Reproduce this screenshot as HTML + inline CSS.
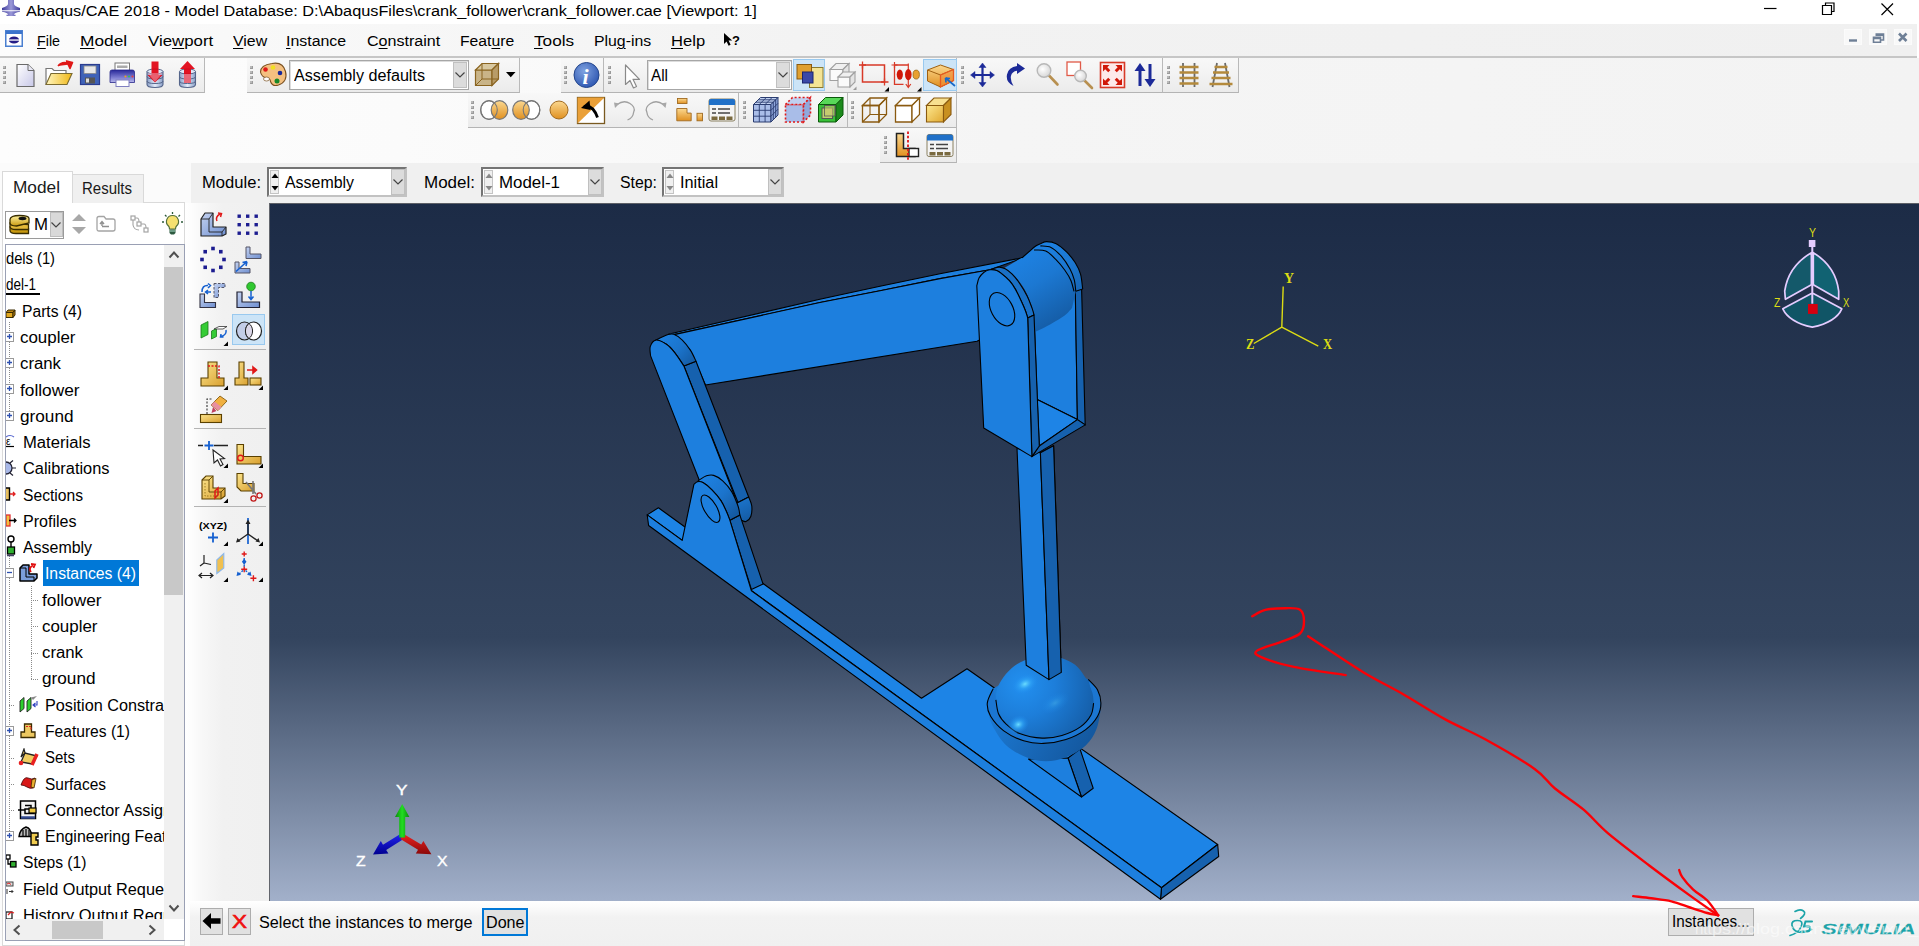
<!DOCTYPE html>
<html><head><meta charset="utf-8"><title>Abaqus/CAE</title><style>html,body{margin:0;padding:0;}html{overflow:hidden;}body{width:1919px;height:946px;overflow:hidden;background:#f0f0f0;position:relative;font-family:"Liberation Sans",sans-serif;}
.t{position:absolute;white-space:pre;display:block;}.b{position:absolute;display:block;}u{text-decoration:underline;text-underline-offset:2px;text-decoration-thickness:1px;}</style></head><body>
<div class="b" style="left:0px;top:0px;width:1919px;height:24px;background:#fff;"></div><span class="t" style="left:26.00px;top:0.56px;font-size:15.4px;line-height:19px;color:#000;font-family:'Liberation Sans',sans-serif;transform:scaleX(1.0589);transform-origin:0 0;">Abaqus/CAE 2018 - Model Database: D:\AbaqusFiles\crank_follower\crank_follower.cae [Viewport: 1]</span><svg class="b" style="left:2px;top:0px;" width="19" height="19" viewBox="0 0 19 19"><defs><linearGradient id="ai" x1="0" x2="1"><stop offset="0" stop-color="#3d3a9a"/><stop offset=".5" stop-color="#9a98d8"/><stop offset="1" stop-color="#3d3a9a"/></linearGradient></defs><path d="M6 0h6v4q0 2 6 4v2.2H0V8q6-2 6-4z" fill="url(#ai)"/><path d="M0 11.2h18v.6q-6 1-6 3l1.5 0v1.2 h-9v-1.2H6q0-2-6-3z" fill="url(#ai)"/></svg><svg class="b" style="left:1760px;top:0px;" width="150" height="22" viewBox="0 0 150 22"><path d="M4 8.5h12.5" stroke="#000" stroke-width="1.2"/><path d="M62.500 5.500h9v9h-9z M65.500 5.500v-2.500h8.500v8.500h-2.500" fill="none" stroke="#000" stroke-width="1.200"/><path d="M121.5 3.5l11.5 11.5M133 3.5l-11.5 11.5" stroke="#000" stroke-width="1.2"/></svg><div class="b" style="left:0px;top:24px;width:1919px;height:33px;background:linear-gradient(90deg,#fcfcfc 0,#f8f8f8 300px,#f2f2f2 900px,#f0f0f0 1919px);"></div><div class="b" style="left:0px;top:56px;width:1919px;height:1.5px;background:#c6c6c6;"></div><div class="b" style="left:1917px;top:24px;width:2px;height:34px;background:#fff;"></div><svg class="b" style="left:5px;top:30px;" width="18" height="17" viewBox="0 0 18 17"><rect x=".75" y=".75" width="16.5" height="15.5" fill="#fff" stroke="#4a7fd0" stroke-width="1.5"/><rect x="1" y="1" width="16" height="3" fill="#3c74cc"/><ellipse cx="9" cy="10" rx="5.2" ry="3.6" fill="#241c86"/><rect x="3" y="9.4" width="12" height="1.3" fill="#fff"/></svg><span class="t" style="left:37.00px;top:31.40px;font-size:15.3px;line-height:19px;color:#000;font-family:'Liberation Sans',sans-serif;transform:scaleX(0.9360);transform-origin:0 0;"><u>F</u>ile</span><span class="t" style="left:80.00px;top:31.40px;font-size:15.3px;line-height:19px;color:#000;font-family:'Liberation Sans',sans-serif;transform:scaleX(1.1316);transform-origin:0 0;"><u>M</u>odel</span><span class="t" style="left:148.00px;top:31.40px;font-size:15.3px;line-height:19px;color:#000;font-family:'Liberation Sans',sans-serif;transform:scaleX(1.1007);transform-origin:0 0;">Vie<u>w</u>port</span><span class="t" style="left:233.00px;top:31.40px;font-size:15.3px;line-height:19px;color:#000;font-family:'Liberation Sans',sans-serif;transform:scaleX(1.0372);transform-origin:0 0;"><u>V</u>iew</span><span class="t" style="left:286.00px;top:31.40px;font-size:15.3px;line-height:19px;color:#000;font-family:'Liberation Sans',sans-serif;transform:scaleX(1.0409);transform-origin:0 0;"><u>I</u>nstance</span><span class="t" style="left:367.00px;top:31.40px;font-size:15.3px;line-height:19px;color:#000;font-family:'Liberation Sans',sans-serif;transform:scaleX(1.0504);transform-origin:0 0;">C<u>o</u>nstraint</span><span class="t" style="left:460.00px;top:31.40px;font-size:15.3px;line-height:19px;color:#000;font-family:'Liberation Sans',sans-serif;transform:scaleX(1.0276);transform-origin:0 0;">Feat<u>u</u>re</span><span class="t" style="left:534.00px;top:31.40px;font-size:15.3px;line-height:19px;color:#000;font-family:'Liberation Sans',sans-serif;transform:scaleX(1.1236);transform-origin:0 0;"><u>T</u>ools</span><span class="t" style="left:594.00px;top:31.40px;font-size:15.3px;line-height:19px;color:#000;font-family:'Liberation Sans',sans-serif;transform:scaleX(1.0346);transform-origin:0 0;">Plu<u>g</u>-ins</span><span class="t" style="left:671.00px;top:31.40px;font-size:15.3px;line-height:19px;color:#000;font-family:'Liberation Sans',sans-serif;transform:scaleX(1.0841);transform-origin:0 0;"><u>H</u>elp</span><svg class="b" style="left:722px;top:32px;" width="20" height="16" viewBox="0 0 20 16"><path d="M2 1v11l2.6-2.6 2 4.4 2-1-2-4.2h3.6z" fill="#000"/><text x="10" y="13" font-family="Liberation Sans" font-weight="bold" font-size="13" fill="#000">?</text></svg><div class="b" style="left:1844px;top:29px;width:18px;height:16px;background:#f8f8f8;border:1px solid #fbfbfb;box-sizing:border-box;"></div><div class="b" style="left:1869px;top:29px;width:18px;height:16px;background:#f8f8f8;border:1px solid #fbfbfb;box-sizing:border-box;"></div><div class="b" style="left:1894px;top:29px;width:18px;height:16px;background:#f8f8f8;border:1px solid #fbfbfb;box-sizing:border-box;"></div><svg class="b" style="left:1844px;top:29px;" width="70" height="16" viewBox="0 0 70 16"><path d="M5 11.5h8" stroke="#6e7f96" stroke-width="2.4"/><path d="M31.5 5h8v6h-2.5M31.5 6.2h8" fill="none" stroke="#6e7f96" stroke-width="1.6"/><path d="M29.5 8.3h7v5h-7zM29.5 9.4h7" fill="#f8f8f8" stroke="#6e7f96" stroke-width="1.6"/><path d="M55 4.5l7.5 7.5M62.5 4.5l-7.5 7.5" stroke="#6e7f96" stroke-width="2.6"/></svg><div class="b" style="left:0px;top:57.5px;width:1919px;height:105.5px;background:linear-gradient(90deg,#fdfdfd 0,#fbfbfb 400px,#f5f5f5 1000px,#f3f3f3 1919px);"></div><div class="b" style="left:0px;top:57.5px;width:205px;height:35px;background:linear-gradient(180deg,#f8f8f8 0,#f3f3f3 45%,#ebebeb 100%);border-right:1px solid #b9b9b9;border-bottom:1.5px solid #b4b4b4;box-sizing:border-box;"></div><div class="b" style="left:247px;top:57.5px;width:273px;height:35px;background:linear-gradient(180deg,#f8f8f8 0,#f3f3f3 45%,#ebebeb 100%);border-right:1px solid #b9b9b9;border-bottom:1.5px solid #b4b4b4;box-sizing:border-box;"></div><div class="b" style="left:561px;top:57.5px;width:43px;height:35px;background:linear-gradient(180deg,#f8f8f8 0,#f3f3f3 45%,#ebebeb 100%);border-right:1px solid #b9b9b9;border-bottom:1.5px solid #b4b4b4;box-sizing:border-box;"></div><div class="b" style="left:604px;top:57.5px;width:353px;height:35px;background:linear-gradient(180deg,#f8f8f8 0,#f3f3f3 45%,#ebebeb 100%);border-right:1px solid #b9b9b9;border-bottom:1.5px solid #b4b4b4;box-sizing:border-box;"></div><div class="b" style="left:957px;top:57.5px;width:206px;height:35px;background:linear-gradient(180deg,#f8f8f8 0,#f3f3f3 45%,#ebebeb 100%);border-right:1px solid #b9b9b9;border-bottom:1.5px solid #b4b4b4;box-sizing:border-box;"></div><div class="b" style="left:1163px;top:57.5px;width:76px;height:35px;background:linear-gradient(180deg,#f8f8f8 0,#f3f3f3 45%,#ebebeb 100%);border-right:1px solid #b9b9b9;border-bottom:1.5px solid #b4b4b4;box-sizing:border-box;"></div><div class="b" style="left:468px;top:92.5px;width:271px;height:35px;background:linear-gradient(180deg,#f8f8f8 0,#f3f3f3 45%,#ebebeb 100%);border-right:1px solid #b9b9b9;border-bottom:1.5px solid #b4b4b4;box-sizing:border-box;"></div><div class="b" style="left:739px;top:92.5px;width:109px;height:35px;background:linear-gradient(180deg,#f8f8f8 0,#f3f3f3 45%,#ebebeb 100%);border-right:1px solid #b9b9b9;border-bottom:1.5px solid #b4b4b4;box-sizing:border-box;"></div><div class="b" style="left:848px;top:92.5px;width:109px;height:35px;background:linear-gradient(180deg,#f8f8f8 0,#f3f3f3 45%,#ebebeb 100%);border-right:1px solid #b9b9b9;border-bottom:1.5px solid #b4b4b4;box-sizing:border-box;"></div><div class="b" style="left:880px;top:127.5px;width:77px;height:35px;background:linear-gradient(180deg,#f8f8f8 0,#f3f3f3 45%,#ebebeb 100%);border-right:1px solid #b9b9b9;border-bottom:1.5px solid #b4b4b4;box-sizing:border-box;"></div><div class="b" style="left:3px;top:65.5px;width:3px;height:3px;background:#9a9a9a;"></div><div class="b" style="left:3px;top:65.5px;width:2px;height:2px;background:#b8b8b8;"></div><div class="b" style="left:3px;top:70.5px;width:3px;height:3px;background:#9a9a9a;"></div><div class="b" style="left:3px;top:70.5px;width:2px;height:2px;background:#b8b8b8;"></div><div class="b" style="left:3px;top:75.5px;width:3px;height:3px;background:#9a9a9a;"></div><div class="b" style="left:3px;top:75.5px;width:2px;height:2px;background:#b8b8b8;"></div><div class="b" style="left:3px;top:80.5px;width:3px;height:3px;background:#9a9a9a;"></div><div class="b" style="left:3px;top:80.5px;width:2px;height:2px;background:#b8b8b8;"></div><div class="b" style="left:250px;top:65.5px;width:3px;height:3px;background:#9a9a9a;"></div><div class="b" style="left:250px;top:65.5px;width:2px;height:2px;background:#b8b8b8;"></div><div class="b" style="left:250px;top:70.5px;width:3px;height:3px;background:#9a9a9a;"></div><div class="b" style="left:250px;top:70.5px;width:2px;height:2px;background:#b8b8b8;"></div><div class="b" style="left:250px;top:75.5px;width:3px;height:3px;background:#9a9a9a;"></div><div class="b" style="left:250px;top:75.5px;width:2px;height:2px;background:#b8b8b8;"></div><div class="b" style="left:250px;top:80.5px;width:3px;height:3px;background:#9a9a9a;"></div><div class="b" style="left:250px;top:80.5px;width:2px;height:2px;background:#b8b8b8;"></div><div class="b" style="left:564px;top:65.5px;width:3px;height:3px;background:#9a9a9a;"></div><div class="b" style="left:564px;top:65.5px;width:2px;height:2px;background:#b8b8b8;"></div><div class="b" style="left:564px;top:70.5px;width:3px;height:3px;background:#9a9a9a;"></div><div class="b" style="left:564px;top:70.5px;width:2px;height:2px;background:#b8b8b8;"></div><div class="b" style="left:564px;top:75.5px;width:3px;height:3px;background:#9a9a9a;"></div><div class="b" style="left:564px;top:75.5px;width:2px;height:2px;background:#b8b8b8;"></div><div class="b" style="left:564px;top:80.5px;width:3px;height:3px;background:#9a9a9a;"></div><div class="b" style="left:564px;top:80.5px;width:2px;height:2px;background:#b8b8b8;"></div><div class="b" style="left:608px;top:65.5px;width:3px;height:3px;background:#9a9a9a;"></div><div class="b" style="left:608px;top:65.5px;width:2px;height:2px;background:#b8b8b8;"></div><div class="b" style="left:608px;top:70.5px;width:3px;height:3px;background:#9a9a9a;"></div><div class="b" style="left:608px;top:70.5px;width:2px;height:2px;background:#b8b8b8;"></div><div class="b" style="left:608px;top:75.5px;width:3px;height:3px;background:#9a9a9a;"></div><div class="b" style="left:608px;top:75.5px;width:2px;height:2px;background:#b8b8b8;"></div><div class="b" style="left:608px;top:80.5px;width:3px;height:3px;background:#9a9a9a;"></div><div class="b" style="left:608px;top:80.5px;width:2px;height:2px;background:#b8b8b8;"></div><div class="b" style="left:960.5px;top:65.5px;width:3px;height:3px;background:#9a9a9a;"></div><div class="b" style="left:960.5px;top:65.5px;width:2px;height:2px;background:#b8b8b8;"></div><div class="b" style="left:960.5px;top:70.5px;width:3px;height:3px;background:#9a9a9a;"></div><div class="b" style="left:960.5px;top:70.5px;width:2px;height:2px;background:#b8b8b8;"></div><div class="b" style="left:960.5px;top:75.5px;width:3px;height:3px;background:#9a9a9a;"></div><div class="b" style="left:960.5px;top:75.5px;width:2px;height:2px;background:#b8b8b8;"></div><div class="b" style="left:960.5px;top:80.5px;width:3px;height:3px;background:#9a9a9a;"></div><div class="b" style="left:960.5px;top:80.5px;width:2px;height:2px;background:#b8b8b8;"></div><div class="b" style="left:1166.5px;top:65.5px;width:3px;height:3px;background:#9a9a9a;"></div><div class="b" style="left:1166.5px;top:65.5px;width:2px;height:2px;background:#b8b8b8;"></div><div class="b" style="left:1166.5px;top:70.5px;width:3px;height:3px;background:#9a9a9a;"></div><div class="b" style="left:1166.5px;top:70.5px;width:2px;height:2px;background:#b8b8b8;"></div><div class="b" style="left:1166.5px;top:75.5px;width:3px;height:3px;background:#9a9a9a;"></div><div class="b" style="left:1166.5px;top:75.5px;width:2px;height:2px;background:#b8b8b8;"></div><div class="b" style="left:1166.5px;top:80.5px;width:3px;height:3px;background:#9a9a9a;"></div><div class="b" style="left:1166.5px;top:80.5px;width:2px;height:2px;background:#b8b8b8;"></div><div class="b" style="left:471px;top:100.5px;width:3px;height:3px;background:#9a9a9a;"></div><div class="b" style="left:471px;top:100.5px;width:2px;height:2px;background:#b8b8b8;"></div><div class="b" style="left:471px;top:105.5px;width:3px;height:3px;background:#9a9a9a;"></div><div class="b" style="left:471px;top:105.5px;width:2px;height:2px;background:#b8b8b8;"></div><div class="b" style="left:471px;top:110.5px;width:3px;height:3px;background:#9a9a9a;"></div><div class="b" style="left:471px;top:110.5px;width:2px;height:2px;background:#b8b8b8;"></div><div class="b" style="left:471px;top:115.5px;width:3px;height:3px;background:#9a9a9a;"></div><div class="b" style="left:471px;top:115.5px;width:2px;height:2px;background:#b8b8b8;"></div><div class="b" style="left:743px;top:100.5px;width:3px;height:3px;background:#9a9a9a;"></div><div class="b" style="left:743px;top:100.5px;width:2px;height:2px;background:#b8b8b8;"></div><div class="b" style="left:743px;top:105.5px;width:3px;height:3px;background:#9a9a9a;"></div><div class="b" style="left:743px;top:105.5px;width:2px;height:2px;background:#b8b8b8;"></div><div class="b" style="left:743px;top:110.5px;width:3px;height:3px;background:#9a9a9a;"></div><div class="b" style="left:743px;top:110.5px;width:2px;height:2px;background:#b8b8b8;"></div><div class="b" style="left:743px;top:115.5px;width:3px;height:3px;background:#9a9a9a;"></div><div class="b" style="left:743px;top:115.5px;width:2px;height:2px;background:#b8b8b8;"></div><div class="b" style="left:851px;top:100.5px;width:3px;height:3px;background:#9a9a9a;"></div><div class="b" style="left:851px;top:100.5px;width:2px;height:2px;background:#b8b8b8;"></div><div class="b" style="left:851px;top:105.5px;width:3px;height:3px;background:#9a9a9a;"></div><div class="b" style="left:851px;top:105.5px;width:2px;height:2px;background:#b8b8b8;"></div><div class="b" style="left:851px;top:110.5px;width:3px;height:3px;background:#9a9a9a;"></div><div class="b" style="left:851px;top:110.5px;width:2px;height:2px;background:#b8b8b8;"></div><div class="b" style="left:851px;top:115.5px;width:3px;height:3px;background:#9a9a9a;"></div><div class="b" style="left:851px;top:115.5px;width:2px;height:2px;background:#b8b8b8;"></div><div class="b" style="left:884px;top:135.5px;width:3px;height:3px;background:#9a9a9a;"></div><div class="b" style="left:884px;top:135.5px;width:2px;height:2px;background:#b8b8b8;"></div><div class="b" style="left:884px;top:140.5px;width:3px;height:3px;background:#9a9a9a;"></div><div class="b" style="left:884px;top:140.5px;width:2px;height:2px;background:#b8b8b8;"></div><div class="b" style="left:884px;top:145.5px;width:3px;height:3px;background:#9a9a9a;"></div><div class="b" style="left:884px;top:145.5px;width:2px;height:2px;background:#b8b8b8;"></div><div class="b" style="left:884px;top:150.5px;width:3px;height:3px;background:#9a9a9a;"></div><div class="b" style="left:884px;top:150.5px;width:2px;height:2px;background:#b8b8b8;"></div><div class="b" style="left:289px;top:59.5px;width:180px;height:30px;background:#fff;border:1px solid #a6a6a6;box-sizing:border-box;box-shadow:inset 1px 1px 0 #dcdcdc;"></div><div class="b" style="left:453px;top:61.5px;width:14px;height:26px;background:#dcdcdc;border:1px solid #c0c0c0;box-sizing:border-box;"></div><svg class="b" style="left:453px;top:70.5px;" width="14" height="8" viewBox="0 0 14 8"><path d="M2.5 1.5 L7 6 L11.5 1.5" fill="none" stroke="#444" stroke-width="1.2"/></svg><span class="t" style="left:294.00px;top:65.56px;font-size:16px;line-height:20px;color:#000;font-family:'Liberation Sans',sans-serif;transform:scaleX(1.0090);transform-origin:0 0;">Assembly defaults</span><div class="b" style="left:647px;top:59.5px;width:145px;height:30px;background:#fff;border:1px solid #a6a6a6;box-sizing:border-box;box-shadow:inset 1px 1px 0 #dcdcdc;"></div><div class="b" style="left:776px;top:61.5px;width:14px;height:26px;background:#dcdcdc;border:1px solid #c0c0c0;box-sizing:border-box;"></div><svg class="b" style="left:776px;top:70.5px;" width="14" height="8" viewBox="0 0 14 8"><path d="M2.5 1.5 L7 6 L11.5 1.5" fill="none" stroke="#444" stroke-width="1.2"/></svg><span class="t" style="left:651.00px;top:65.56px;font-size:16px;line-height:20px;color:#000;font-family:'Liberation Sans',sans-serif;transform:scaleX(0.9561);transform-origin:0 0;">All</span><div class="b" style="left:0px;top:163px;width:191px;height:40px;background:#fbfbfb;"></div><div class="b" style="left:191px;top:163px;width:1728px;height:40px;background:#f0f0f0;"></div><span class="t" style="left:202.00px;top:172.56px;font-size:16px;line-height:20px;color:#000;font-family:'Liberation Sans',sans-serif;transform:scaleX(1.0365);transform-origin:0 0;">Module:</span><div class="b" style="left:267px;top:167px;width:140px;height:30px;background:#fff;border:2px solid;border-color:#747474 #c2c2c2 #c2c2c2 #747474;box-sizing:border-box;"></div><div class="b" style="left:391px;top:169px;width:14px;height:26px;background:#dcdcdc;border:1px solid #c0c0c0;box-sizing:border-box;"></div><svg class="b" style="left:391px;top:178px;" width="14" height="8" viewBox="0 0 14 8"><path d="M2.5 1.5 L7 6 L11.5 1.5" fill="none" stroke="#444" stroke-width="1.2"/></svg><div class="b" style="left:270px;top:170px;width:9px;height:24px;background:#f0f0f0;border:1px solid #c4c4c4;box-sizing:border-box;"></div><span class="t" style="left:285.00px;top:172.56px;font-size:16px;line-height:20px;color:#000;font-family:'Liberation Sans',sans-serif;transform:scaleX(0.9949);transform-origin:0 0;">Assembly</span><span class="t" style="left:424.00px;top:172.56px;font-size:16px;line-height:20px;color:#000;font-family:'Liberation Sans',sans-serif;transform:scaleX(1.0620);transform-origin:0 0;">Model:</span><div class="b" style="left:481px;top:167px;width:123px;height:30px;background:#fff;border:2px solid;border-color:#747474 #c2c2c2 #c2c2c2 #747474;box-sizing:border-box;"></div><div class="b" style="left:588px;top:169px;width:14px;height:26px;background:#dcdcdc;border:1px solid #c0c0c0;box-sizing:border-box;"></div><svg class="b" style="left:588px;top:178px;" width="14" height="8" viewBox="0 0 14 8"><path d="M2.5 1.5 L7 6 L11.5 1.5" fill="none" stroke="#444" stroke-width="1.2"/></svg><div class="b" style="left:484px;top:170px;width:9px;height:24px;background:#f0f0f0;border:1px solid #c4c4c4;box-sizing:border-box;"></div><span class="t" style="left:499.00px;top:172.56px;font-size:16px;line-height:20px;color:#000;font-family:'Liberation Sans',sans-serif;transform:scaleX(1.0553);transform-origin:0 0;">Model-1</span><span class="t" style="left:620.00px;top:172.56px;font-size:16px;line-height:20px;color:#000;font-family:'Liberation Sans',sans-serif;transform:scaleX(0.9904);transform-origin:0 0;">Step:</span><div class="b" style="left:662px;top:167px;width:122px;height:30px;background:#fff;border:2px solid;border-color:#747474 #c2c2c2 #c2c2c2 #747474;box-sizing:border-box;"></div><div class="b" style="left:768px;top:169px;width:14px;height:26px;background:#dcdcdc;border:1px solid #c0c0c0;box-sizing:border-box;"></div><svg class="b" style="left:768px;top:178px;" width="14" height="8" viewBox="0 0 14 8"><path d="M2.5 1.5 L7 6 L11.5 1.5" fill="none" stroke="#444" stroke-width="1.2"/></svg><div class="b" style="left:665px;top:170px;width:9px;height:24px;background:#f0f0f0;border:1px solid #c4c4c4;box-sizing:border-box;"></div><span class="t" style="left:680.00px;top:172.56px;font-size:16px;line-height:20px;color:#000;font-family:'Liberation Sans',sans-serif;transform:scaleX(1.0174);transform-origin:0 0;">Initial</span><svg class="b" style="left:271px;top:171px;" width="8" height="22" viewBox="0 0 8 22"><path d="M0.5 7L4 2.5 7.5 7z" fill="#000"/><path d="M0.5 15L4 19.5 7.5 15z" fill="#000"/></svg><svg class="b" style="left:485px;top:171px;" width="8" height="22" viewBox="0 0 8 22"><path d="M0.5 7L4 2.5 7.5 7z" fill="#888"/><path d="M0.5 15L4 19.5 7.5 15z" fill="#888"/></svg><svg class="b" style="left:666px;top:171px;" width="8" height="22" viewBox="0 0 8 22"><path d="M0.5 7L4 2.5 7.5 7z" fill="#888"/><path d="M0.5 15L4 19.5 7.5 15z" fill="#888"/></svg>
<div class="b" style="left:0px;top:163px;width:191px;height:783px;background:#fbfbfb;"></div><div class="b" style="left:2px;top:202px;width:183px;height:744px;background:#fff;border:1px solid #dadada;box-sizing:border-box;"></div><div class="b" style="left:72px;top:173.5px;width:71.5px;height:29px;background:#f0f0f0;border:1px solid #d9d9d9;border-bottom:none;box-sizing:border-box;"></div><div class="b" style="left:2px;top:170.5px;width:71px;height:32.5px;background:#fff;border:1px solid #d9d9d9;border-bottom:none;box-sizing:border-box;"></div><span class="t" style="left:13.00px;top:177.56px;font-size:16px;line-height:20px;color:#1a1a1a;font-family:'Liberation Sans',sans-serif;transform:scaleX(1.0785);transform-origin:0 0;">Model</span><span class="t" style="left:82.00px;top:178.56px;font-size:16px;line-height:20px;color:#1a1a1a;font-family:'Liberation Sans',sans-serif;transform:scaleX(0.9372);transform-origin:0 0;">Results</span><div class="b" style="left:5px;top:210.5px;width:59px;height:28px;background:#fff;border:1px solid #9a9a9a;box-sizing:border-box;"></div><div class="b" style="left:49.5px;top:212px;width:13px;height:25px;background:#d9d9d9;border:1px solid #bdbdbd;box-sizing:border-box;"></div><svg class="b" style="left:50px;top:221px;" width="12" height="8" viewBox="0 0 12 8"><path d="M1.500 1.500L6 6 10.500 1.500" fill="none" stroke="#444" stroke-width="1.200"/></svg><svg class="b" style="left:9px;top:214px;" width="21" height="21" viewBox="0 0 21 21"><defs><linearGradient id="dg" x1="0" x2="0" y1="0" y2="1"><stop offset="0" stop-color="#fff3a0"/><stop offset="1" stop-color="#c99a10"/></linearGradient></defs><g stroke="#3a2e00" stroke-width="1.300"><path d="M1 13v3.500q0 3 6 3h12.500v-5z" fill="#c99a10"/><path d="M1 9v3.500q0 3 6 3h12.500v-5z" fill="#e2b838"/><path d="M1 5.500q0-4 9.500-4t9.500 3v4.500l-12.500 3q-6.500 0-6.500-3z" fill="url(#dg)"/></g><ellipse cx="13.500" cy="4.500" rx="4" ry="1.700" fill="#111"/></svg><span class="t" style="left:34.00px;top:215.06px;font-size:16px;line-height:20px;color:#000;font-family:'Liberation Sans',sans-serif;transform:scaleX(1.0504);transform-origin:0 0;">M</span><svg class="b" style="left:72px;top:213px;" width="14" height="22" viewBox="0 0 14 22"><path d="M0 8L7 1l7 7zM0 14l7 7 7-7z" fill="#a8a8a8"/></svg><svg class="b" style="left:96px;top:215px;" width="20" height="17" viewBox="0 0 20 17"><path d="M1 3.500q0-2 2-2h5l2 2.500h7q2 0 2 2v8q0 2-2 2H3q-2 0-2-2z" fill="none" stroke="#a4a4a4" stroke-width="1.300"/><path d="M6 11V7M4 9l2-2.500 2 2.500M6 11.500h7" fill="none" stroke="#909090" stroke-width="1.400"/></svg><svg class="b" style="left:130px;top:215px;" width="19" height="19" viewBox="0 0 19 19"><g fill="#fff" stroke="#a4a4a4" stroke-width="1.200"><rect x="1" y="1" width="4" height="4"/><rect x="7" y="7" width="4" height="4"/><rect x="14" y="13" width="4" height="4"/></g><path d="M3 5v5q1 5 6 5M5 3h2q2 0 2 4M11 9h3q2 0 2 4" fill="none" stroke="#a4a4a4" stroke-width="1.100"/></svg><svg class="b" style="left:162px;top:212px;" width="21" height="23" viewBox="0 0 21 23"><g stroke="#2c5a3a" stroke-width="1.300"><path d="M10.500 0v2M3 3l1.500 1.500M18 3l-1.500 1.500M0 10h2M21 10h-2"/></g><path d="M10.500 3.500a6 6 0 0 1 4 10.500q-1 1-1 3h-6q0-2-1-3a6 6 0 0 1 4-10.500z" fill="#f6e070" stroke="#54703a" stroke-width="1.200"/><path d="M7.500 17.500h6v3.500l-1.500 1.500h-3L7.500 21z" fill="#2d5a40"/><path d="M8 19h5" stroke="#cfe" stroke-width=".8"/></svg><div class="b" style="left:5px;top:244px;width:180px;height:697px;background:#fff;border:1px solid #9aa0b4;box-sizing:border-box;"></div><div class="b" style="left:6px;top:245px;width:157.500px;height:674px;overflow:hidden;"><div class="b" style="left:-6px;top:-245px;width:200px;height:946px;"><span class="t" style="left:6.00px;top:249.16px;font-size:16px;line-height:20px;color:#000;font-family:'Liberation Sans',sans-serif;transform:scaleX(0.9184);transform-origin:0 0;">dels (1)</span><span class="t" style="left:6.00px;top:275.43px;font-size:16px;line-height:20px;color:#000;font-family:'Liberation Sans',sans-serif;transform:scaleX(0.8432);transform-origin:0 0;">del-1</span><div class="b" style="left:6px;top:292.5px;width:33.5px;height:2.3px;background:#000;"></div><div class="b" style="left:8.5px;top:322px;width:1px;height:96px;background-image:linear-gradient(#8a8a8a 50%,transparent 50%);background-size:1px 2px;"></div><div class="b" style="left:8.5px;top:556px;width:1px;height:276px;background-image:linear-gradient(#8a8a8a 50%,transparent 50%);background-size:1px 2px;"></div><div class="b" style="left:31px;top:586px;width:1px;height:93px;background-image:linear-gradient(#8a8a8a 50%,transparent 50%);background-size:1px 2px;"></div><div class="b" style="left:31px;top:600.01px;width:7px;height:1px;background-image:linear-gradient(90deg,#8a8a8a 50%,transparent 50%);background-size:2px 1px;"></div><div class="b" style="left:31px;top:626.28px;width:7px;height:1px;background-image:linear-gradient(90deg,#8a8a8a 50%,transparent 50%);background-size:2px 1px;"></div><div class="b" style="left:31px;top:652.55px;width:7px;height:1px;background-image:linear-gradient(90deg,#8a8a8a 50%,transparent 50%);background-size:2px 1px;"></div><div class="b" style="left:31px;top:678.82px;width:7px;height:1px;background-image:linear-gradient(90deg,#8a8a8a 50%,transparent 50%);background-size:2px 1px;"></div><div class="b" style="left:9px;top:705.09px;width:6px;height:1px;background-image:linear-gradient(90deg,#8a8a8a 50%,transparent 50%);background-size:2px 1px;"></div><div class="b" style="left:9px;top:757.63px;width:6px;height:1px;background-image:linear-gradient(90deg,#8a8a8a 50%,transparent 50%);background-size:2px 1px;"></div><div class="b" style="left:9px;top:783.9px;width:6px;height:1px;background-image:linear-gradient(90deg,#8a8a8a 50%,transparent 50%);background-size:2px 1px;"></div><div class="b" style="left:9px;top:810.17px;width:6px;height:1px;background-image:linear-gradient(90deg,#8a8a8a 50%,transparent 50%);background-size:2px 1px;"></div><svg class="b" style="left:6px;top:308.54px;" width="10" height="10" viewBox="0 0 10 10"><path d="M0 3.5h7v5h-7z" fill="#e2a820" stroke="#3a2a00" stroke-width="1"/><path d="M0 3.5l2-2.5h7l-2 2.5zM7 3.5l2-2.5v5l-2 2.5z" fill="#b98412" stroke="#3a2a00" stroke-width="1"/></svg><span class="t" style="left:22.00px;top:301.70px;font-size:16px;line-height:20px;color:#000;font-family:'Liberation Sans',sans-serif;transform:scaleX(0.9781);transform-origin:0 0;">Parts (4)</span><svg class="b" style="left:5px;top:331.81px;" width="9" height="10" viewBox="0 0 9 10"><rect x=".5" y=".5" width="8" height="9" fill="#fff" stroke="#9a9a9a"/><path d="M2 4.5h5M4.5 2v5" stroke="#2c4fb0" stroke-width="1.3"/></svg><span class="t" style="left:19.50px;top:327.97px;font-size:16px;line-height:20px;color:#000;font-family:'Liberation Sans',sans-serif;transform:scaleX(1.0576);transform-origin:0 0;">coupler</span><svg class="b" style="left:5px;top:358.08px;" width="9" height="10" viewBox="0 0 9 10"><rect x=".5" y=".5" width="8" height="9" fill="#fff" stroke="#9a9a9a"/><path d="M2 4.5h5M4.5 2v5" stroke="#2c4fb0" stroke-width="1.3"/></svg><span class="t" style="left:19.50px;top:354.24px;font-size:16px;line-height:20px;color:#000;font-family:'Liberation Sans',sans-serif;transform:scaleX(1.0479);transform-origin:0 0;">crank</span><svg class="b" style="left:5px;top:384.35px;" width="9" height="10" viewBox="0 0 9 10"><rect x=".5" y=".5" width="8" height="9" fill="#fff" stroke="#9a9a9a"/><path d="M2 4.5h5M4.5 2v5" stroke="#2c4fb0" stroke-width="1.3"/></svg><span class="t" style="left:19.50px;top:380.51px;font-size:16px;line-height:20px;color:#000;font-family:'Liberation Sans',sans-serif;transform:scaleX(1.0792);transform-origin:0 0;">follower</span><svg class="b" style="left:5px;top:410.62px;" width="9" height="10" viewBox="0 0 9 10"><rect x=".5" y=".5" width="8" height="9" fill="#fff" stroke="#9a9a9a"/><path d="M2 4.5h5M4.5 2v5" stroke="#2c4fb0" stroke-width="1.3"/></svg><span class="t" style="left:19.50px;top:406.78px;font-size:16px;line-height:20px;color:#000;font-family:'Liberation Sans',sans-serif;transform:scaleX(1.0739);transform-origin:0 0;">ground</span><svg class="b" style="left:6px;top:433.89px;" width="10" height="14" viewBox="0 0 10 14"><path d="M0 3q4-3 8 0" fill="none" stroke="#5a6ad0" stroke-width="1.2"/><text x="0" y="11" font-size="10" font-family="Liberation Sans" fill="#000">ε</text><path d="M0 12.5h8" stroke="#000" stroke-width="1.2"/></svg><span class="t" style="left:22.50px;top:433.05px;font-size:16px;line-height:20px;color:#000;font-family:'Liberation Sans',sans-serif;transform:scaleX(1.0400);transform-origin:0 0;">Materials</span><svg class="b" style="left:6px;top:460.16px;" width="10" height="16" viewBox="0 0 10 16"><circle cx="0" cy="8" r="6" fill="#a8b8e8" stroke="#223" stroke-width="1.3"/><path d="M6 8h4M4 3l3-2.5M4 13l3 2.500" stroke="#223" stroke-width="1.2"/></svg><span class="t" style="left:22.50px;top:459.32px;font-size:16px;line-height:20px;color:#000;font-family:'Liberation Sans',sans-serif;transform:scaleX(1.0239);transform-origin:0 0;">Calibrations</span><svg class="b" style="left:6px;top:486.43px;" width="10" height="16" viewBox="0 0 10 16"><path d="M0 2h3.500v12H0" fill="#e8c060" stroke="#000" stroke-width="1.4"/><path d="M4 8h5M7 6l2 2-2 2" stroke="#e02020" stroke-width="1.3" fill="none"/></svg><span class="t" style="left:22.50px;top:485.59px;font-size:16px;line-height:20px;color:#000;font-family:'Liberation Sans',sans-serif;transform:scaleX(0.9777);transform-origin:0 0;">Sections</span><svg class="b" style="left:6px;top:513.7px;" width="11" height="14" viewBox="0 0 11 14"><rect x="0" y="1" width="4" height="11" fill="#f0c040" stroke="#e03030" stroke-width="1.3"/><path d="M3 6.5h7M8 4.500l2 2-2 2" stroke="#000" stroke-width="1.3" fill="none"/></svg><span class="t" style="left:22.50px;top:511.86px;font-size:16px;line-height:20px;color:#000;font-family:'Liberation Sans',sans-serif;transform:scaleX(1.0028);transform-origin:0 0;">Profiles</span><svg class="b" style="left:6px;top:534.97px;" width="10" height="22" viewBox="0 0 10 22"><circle cx="5" cy="4" r="3" fill="#fff" stroke="#000" stroke-width="1.4"/><path d="M5 7v6" stroke="#000" stroke-width="1.4"/><rect x="1.500" y="12" width="7" height="7" fill="#30b030" stroke="#000" stroke-width="1.3"/><path d="M1 20.500h7" stroke="#446" stroke-width="1.5"/></svg><span class="t" style="left:22.50px;top:538.13px;font-size:16px;line-height:20px;color:#000;font-family:'Liberation Sans',sans-serif;transform:scaleX(0.9949);transform-origin:0 0;">Assembly</span><svg class="b" style="left:5px;top:568.24px;" width="9" height="10" viewBox="0 0 9 10"><rect x=".5" y=".5" width="8" height="9" fill="#fff" stroke="#9a9a9a"/><path d="M2 4.5h5" stroke="#2c4fb0" stroke-width="1.3"/></svg><svg class="b" style="left:19px;top:563.24px;" width="20" height="19" viewBox="0 0 20 19"><path d="M1 5l3-3h6v9h8l0 4-3 3H1z" fill="#7b9edb" stroke="#000" stroke-width="1.5" stroke-linejoin="round"/><path d="M1 5h6v9h8v4" fill="none" stroke="#000" stroke-width="1"/><path d="M12 9q-3-4 2-6.500M12 1l4 .5-1.500 3.500" fill="none" stroke="#e01010" stroke-width="1.800"/></svg><div class="b" style="left:43px;top:560.2px;width:96px;height:26px;background:#0078d7;"></div><span class="t" style="left:45.00px;top:564.40px;font-size:16px;line-height:20px;color:#fff;font-family:'Liberation Sans',sans-serif;transform:scaleX(0.9839);transform-origin:0 0;">Instances (4)</span><span class="t" style="left:42.00px;top:590.67px;font-size:16px;line-height:20px;color:#000;font-family:'Liberation Sans',sans-serif;transform:scaleX(1.0792);transform-origin:0 0;">follower</span><span class="t" style="left:42.00px;top:616.94px;font-size:16px;line-height:20px;color:#000;font-family:'Liberation Sans',sans-serif;transform:scaleX(1.0576);transform-origin:0 0;">coupler</span><span class="t" style="left:42.00px;top:643.21px;font-size:16px;line-height:20px;color:#000;font-family:'Liberation Sans',sans-serif;transform:scaleX(1.0479);transform-origin:0 0;">crank</span><span class="t" style="left:42.00px;top:669.48px;font-size:16px;line-height:20px;color:#000;font-family:'Liberation Sans',sans-serif;transform:scaleX(1.0739);transform-origin:0 0;">ground</span><svg class="b" style="left:19px;top:696.09px;" width="20" height="17" viewBox="0 0 20 17"><path d="M1 5l4-3.500v11L1 16zM8 5l4-3.500v11L8 16z" fill="#2fd02f" stroke="#222" stroke-width=".9"/><path d="M12 1.500l6-1.500-4 4z" fill="#888"/><path d="M18 5v4h-4M16.500 7l-2.500 2 2.500 2" stroke="#3040c0" stroke-width="1.100" fill="none"/></svg><span class="t" style="left:45.00px;top:695.75px;font-size:16px;line-height:20px;color:#000;font-family:'Liberation Sans',sans-serif;transform:scaleX(1.0137);transform-origin:0 0;">Position Constraints</span><svg class="b" style="left:5px;top:725.86px;" width="9" height="10" viewBox="0 0 9 10"><rect x=".5" y=".5" width="8" height="9" fill="#fff" stroke="#9a9a9a"/><path d="M2 4.5h5M4.5 2v5" stroke="#2c4fb0" stroke-width="1.3"/></svg><svg class="b" style="left:20px;top:722.86px;" width="16" height="16" viewBox="0 0 16 16"><path d="M4.500 1h7v8h3.500v5.500H1V9h3.500z" fill="#edc860" stroke="#3a2a00" stroke-width="1.300"/><path d="M6 3.500h5v4" fill="none" stroke="#e02020" stroke-width="1.200" stroke-dasharray="2 1"/></svg><span class="t" style="left:45.00px;top:722.02px;font-size:16px;line-height:20px;color:#000;font-family:'Liberation Sans',sans-serif;transform:scaleX(0.9754);transform-origin:0 0;">Features (1)</span><svg class="b" style="left:18px;top:748.13px;" width="21" height="18" viewBox="0 0 21 18"><path d="M3 14L7 5l12 3-5 8z" fill="#f0cc60" stroke="#222" stroke-width="1.300"/><path d="M7 5L6 1 3 9z" fill="#f0cc60" stroke="#222" stroke-width="1.200"/><path d="M19 6l-5 11" stroke="#e82020" stroke-width="3.500"/><circle cx="3" cy="15" r="2.300" fill="#e82020"/></svg><span class="t" style="left:45.00px;top:748.29px;font-size:16px;line-height:20px;color:#000;font-family:'Liberation Sans',sans-serif;transform:scaleX(0.9370);transform-origin:0 0;">Sets</span><svg class="b" style="left:20px;top:776.4px;" width="18" height="14" viewBox="0 0 18 14"><path d="M1 9Q4 0 8 2t7 0l-2 10q-3 1-6-1T1 9z" fill="#d81818" stroke="#400" stroke-width=".8"/><path d="M12 3.500l4-1-2 9.500-3-1z" fill="#e8b030" stroke="#420" stroke-width=".8"/></svg><span class="t" style="left:45.00px;top:774.56px;font-size:16px;line-height:20px;color:#000;font-family:'Liberation Sans',sans-serif;transform:scaleX(0.9661);transform-origin:0 0;">Surfaces</span><svg class="b" style="left:18px;top:799.67px;" width="20" height="20" viewBox="0 0 20 20"><rect x="2.500" y="1" width="15" height="17.500" fill="#f4f4f4" stroke="#000" stroke-width="1.500"/><path d="M0 10h7M7 5.500h6v3.500H7v4.500h9V9" fill="none" stroke="#000" stroke-width="1.500"/><rect x="11" y="8" width="7" height="5" fill="#f0c840" stroke="#000" stroke-width="1.200"/><path d="M3 17.500h14" stroke="#334a90" stroke-width="2.500"/></svg><span class="t" style="left:45.00px;top:800.83px;font-size:16px;line-height:20px;color:#000;font-family:'Liberation Sans',sans-serif;transform:scaleX(1.0128);transform-origin:0 0;">Connector Assignments</span><svg class="b" style="left:5px;top:830.94px;" width="9" height="10" viewBox="0 0 9 10"><rect x=".5" y=".5" width="8" height="9" fill="#fff" stroke="#9a9a9a"/><path d="M2 4.5h5M4.5 2v5" stroke="#2c4fb0" stroke-width="1.3"/></svg><svg class="b" style="left:18px;top:825.94px;" width="21" height="20" viewBox="0 0 21 20"><path d="M1 10.500Q2 3 8 1q5 1 6 9.500z" fill="#bbb" stroke="#000" stroke-width="1.400"/><path d="M5 4v6M8 3v7M11 4v6" stroke="#000" stroke-width="1.200"/><path d="M13 7h7v4h-2v3h2v5h-7z" fill="#f0cc50" stroke="#000" stroke-width="1.400"/></svg><span class="t" style="left:45.00px;top:827.10px;font-size:16px;line-height:20px;color:#000;font-family:'Liberation Sans',sans-serif;transform:scaleX(0.9965);transform-origin:0 0;">Engineering Features</span><svg class="b" style="left:6px;top:854.21px;" width="11" height="14" viewBox="0 0 11 14"><rect x="0" y="1" width="4" height="4" fill="#fff" stroke="#000" stroke-width="1.300"/><path d="M2 5v5h2" stroke="#000" stroke-width="1.300" fill="none"/><rect x="4.500" y="7.500" width="5.500" height="5.500" fill="#30b030" stroke="#000" stroke-width="1.300"/></svg><span class="t" style="left:22.50px;top:853.37px;font-size:16px;line-height:20px;color:#000;font-family:'Liberation Sans',sans-serif;transform:scaleX(0.9782);transform-origin:0 0;">Steps (1)</span><svg class="b" style="left:6px;top:881.48px;" width="10" height="14" viewBox="0 0 10 14"><rect x="0" y="1" width="7" height="4" fill="#ddd" stroke="#444" stroke-width="1"/><path d="M1 3l2-1 2 1.500" stroke="#e02020" fill="none"/><path d="M1 8v5M3 10.500h4M5.500 9l1.500 1.500-1.500 1.500" stroke="#333" stroke-width="1" fill="none"/></svg><span class="t" style="left:22.50px;top:879.64px;font-size:16px;line-height:20px;color:#000;font-family:'Liberation Sans',sans-serif;transform:scaleX(1.0162);transform-origin:0 0;">Field Output Requests</span><svg class="b" style="left:6px;top:908.75px;" width="10" height="12" viewBox="0 0 10 12"><rect x="0" y="3" width="6" height="7" fill="#fff" stroke="#222" stroke-width="1.300"/><path d="M2 6l3-3 3 1" stroke="#e02020" stroke-width="1.300" fill="none"/></svg><span class="t" style="left:22.50px;top:905.91px;font-size:16px;line-height:20px;color:#000;font-family:'Liberation Sans',sans-serif;transform:scaleX(1.0290);transform-origin:0 0;">History Output Requests</span></div></div><div class="b" style="left:164px;top:245px;width:20px;height:674px;background:#f0f0f0;"></div><div class="b" style="left:164px;top:267px;width:19px;height:328px;background:#c8c8c8;"></div><svg class="b" style="left:168px;top:250px;" width="12" height="9" viewBox="0 0 12 9"><path d="M1.500 7.500L6 2.500 10.500 7.500" fill="none" stroke="#505050" stroke-width="2"/></svg><svg class="b" style="left:168px;top:904px;" width="12" height="9" viewBox="0 0 12 9"><path d="M1.500 1.500L6 6.500 10.500 1.500" fill="none" stroke="#505050" stroke-width="2"/></svg><div class="b" style="left:6px;top:919px;width:157.5px;height:21px;background:#f0f0f0;"></div><div class="b" style="left:52px;top:920.5px;width:51px;height:18px;background:#c8c8c8;"></div><svg class="b" style="left:12px;top:924px;" width="9" height="12" viewBox="0 0 9 12"><path d="M7.500 1.500L2.500 6 7.500 10.500" fill="none" stroke="#505050" stroke-width="2"/></svg><svg class="b" style="left:148px;top:924px;" width="9" height="12" viewBox="0 0 9 12"><path d="M1.500 1.500L6.500 6 1.500 10.500" fill="none" stroke="#505050" stroke-width="2"/></svg><div class="b" style="left:163.5px;top:919px;width:20.5px;height:21px;background:#fff;"></div><div class="b" style="left:185px;top:163px;width:6px;height:40px;background:#fbfbfb;"></div>
<div class="b" style="left:185px;top:203px;width:84px;height:743px;background:linear-gradient(90deg,#fff 0,#fdfdfd 6px,#f7f7f7 18px,#f1f1f1 38px,#f0f0f0 84px);"></div><div class="b" style="left:194px;top:348.75px;width:72px;height:1.5px;background:#b4b4b4;"></div><div class="b" style="left:194px;top:427.75px;width:72px;height:1.5px;background:#b4b4b4;"></div><div class="b" style="left:194px;top:505.75px;width:72px;height:1.5px;background:#b4b4b4;"></div><div class="b" style="left:232px;top:314px;width:32.5px;height:31px;background:#cce4f7;border:1px solid #99c9ef;box-sizing:border-box;"></div><svg class="b" style="left:192px;top:203px;" width="77" height="400" viewBox="192 203 77 400"><defs><linearGradient id="bl" x1="0" y1="0" x2="1" y2="1"><stop offset="0" stop-color="#c4d2f0"/><stop offset="1" stop-color="#6f8fd0"/></linearGradient><linearGradient id="yl" x1="0" y1="0" x2="1" y2="1"><stop offset="0" stop-color="#fbe48c"/><stop offset="1" stop-color="#d9a030"/></linearGradient></defs><path d="M201 219l4-6h8v14h13v7l-4 2h-21z" fill="url(#bl)" stroke="#222" stroke-width="1.200" stroke-linejoin="round"/><path d="M201 219h8v13h13v4M209 219l4-6M222 232l4-5" fill="none" stroke="#222" stroke-width=".9"/><path d="M217 221q-2-4 3-7M218 213l3.500.500-1 3.500" fill="none" stroke="#e01818" stroke-width="1.500"/><rect x="237.5" y="214.5" width="3.400" height="3.400" fill="#1c1c90"/><rect x="237.5" y="223" width="3.400" height="3.400" fill="#1c1c90"/><rect x="237.5" y="231.5" width="3.400" height="3.400" fill="#1c1c90"/><rect x="246" y="214.5" width="3.400" height="3.400" fill="#1c1c90"/><rect x="246" y="223" width="3.400" height="3.400" fill="#1c1c90"/><rect x="246" y="231.5" width="3.400" height="3.400" fill="#1c1c90"/><rect x="254.5" y="214.5" width="3.400" height="3.400" fill="#1c1c90"/><rect x="254.5" y="223" width="3.400" height="3.400" fill="#1c1c90"/><rect x="254.5" y="231.5" width="3.400" height="3.400" fill="#1c1c90"/><rect x="222.2" y="257.7" width="3.600" height="3.600" fill="#1c1c90"/><rect x="219.0" y="265.5" width="3.600" height="3.600" fill="#1c1c90"/><rect x="211.2" y="268.7" width="3.600" height="3.600" fill="#1c1c90"/><rect x="203.4" y="265.5" width="3.600" height="3.600" fill="#1c1c90"/><rect x="200.2" y="257.7" width="3.600" height="3.600" fill="#1c1c90"/><rect x="203.4" y="249.9" width="3.600" height="3.600" fill="#1c1c90"/><rect x="211.2" y="246.7" width="3.600" height="3.600" fill="#1c1c90"/><rect x="219.0" y="249.9" width="3.600" height="3.600" fill="#1c1c90"/><path d="M246 247h4v7h11v4.500h-15z" fill="url(#bl)" stroke="#556" stroke-width="1"/><path d="M235 262h4v6.500h11v4.500h-15z" fill="url(#bl)" stroke="#556" stroke-width="1"/><path d="M236 271.500l11-10M247 261.500l-4.500 1M247 261.500l-1 4.500" stroke="#1560d0" stroke-width="1.600" fill="none"/><path d="M214 283.500h11v4h-6.500v10h-4.500z" fill="url(#bl)" stroke="#556" stroke-width="1" stroke-dasharray="2.500 1.500"/><path d="M200 294h4.500v8.500h11v5h-15.500z" fill="url(#bl)" stroke="#334" stroke-width="1.100"/><path d="M202 292q0-7 6-6.500M208 283.500l2.500 2-2.500 2.500M211 292h-5M208 290l-2.500 2 2.500 2" fill="none" stroke="#1560d0" stroke-width="1.500"/><path d="M237 292h5v10h17.500v5.500h-22.500z" fill="url(#bl)" stroke="#223" stroke-width="1.200"/><circle cx="251" cy="286.500" r="4.300" fill="#30c830" stroke="#1a7a1a" stroke-width=".8"/><path d="M251 291v8M248.500 296.500l2.500 3 2.500-3" stroke="#1560d0" stroke-width="1.500" fill="none"/><path d="M201 325l7-3.500v13l-7 3.500z" fill="#35cc35" stroke="#1a7a1a" stroke-width=".8"/><path d="M211.500 331l5-2.500v8l-5 2.500z" fill="#35cc35" stroke="#1a7a1a" stroke-width=".8"/><path d="M214 329l5-2.500h8l-4 2.500z" fill="#fff" stroke="#333" stroke-width=".8"/><path d="M226 330q1 5-5 6.500M221 334l-.5 3 3 0" fill="none" stroke="#1560d0" stroke-width="1.500"/><path d="M228 346v-4.500l-4.500 4.500z" fill="#000"/><ellipse cx="244.500" cy="331" rx="8" ry="9" fill="#c3cde8" stroke="#222" stroke-width="1.200"/><ellipse cx="253.500" cy="331" rx="8" ry="9" fill="#fff" stroke="#222" stroke-width="1.200"/><path d="M249 323.500a8 9 0 0 1 0 15a8 9 0 0 1 0-15z" fill="#dcd8ea" stroke="#222" stroke-width="1"/><path d="M208 362h9v16h7v8h-23v-8h7z" fill="url(#yl)" stroke="#5a4000" stroke-width="1.100"/><path d="M208 366h11v12" fill="none" stroke="#e01818" stroke-width="1.500" stroke-dasharray="2 1.500"/><path d="M228 390v-4.500l-4.500 4.500z" fill="#000"/><path d="M239 362h5v16h4v7h-13v-7h4z" fill="url(#yl)" stroke="#5a4000" stroke-width="1.100"/><rect x="250" y="378" width="11" height="7" fill="url(#yl)" stroke="#5a4000" stroke-width="1.100"/><path d="M247 370h9M253 367l3.500 3-3.500 3z" stroke="#e01818" stroke-width="1.600" fill="#e01818"/><path d="M263 390v-4.500l-4.500 4.500z" fill="#000"/><rect x="200.500" y="414.500" width="21" height="8" fill="url(#yl)" stroke="#5a4000" stroke-width="1.100"/><path d="M207 414v-15h6" fill="none" stroke="#333" stroke-width="1.100" stroke-dasharray="2 1.500"/><path d="M211 405l9-9 7 5-9 9.500z" fill="#f0b040" stroke="#7a5000" stroke-width=".8"/><path d="M211 405l3.500-3.500 7 5.500-3.500 3.500z" fill="#e890a0"/><path d="M213 407l-1.500 6 5-2z" fill="#c04060"/><path d="M198 445.500h5M214 445.500h14" stroke="#222" stroke-width="1.600"/><path d="M204.500 445.500h9M209 441v9" stroke="#1560d0" stroke-width="1.800"/><path d="M213 450l1 13 3.500-3 3 6 2.500-1.500-3-5.500 4.500-.5z" fill="#fff" stroke="#222" stroke-width="1.100"/><path d="M228 468v-4.500l-4.500 4.500z" fill="#000"/><path d="M237 444.500h6.500v12h17.500v7.500h-24z" fill="url(#yl)" stroke="#5a4000" stroke-width="1.100"/><circle cx="240.500" cy="458" r="2.800" fill="none" stroke="#e01818" stroke-width="1.400"/><path d="M263 468v-4.500l-4.500 4.500z" fill="#000"/><path d="M202 480l4-4h7v12h12v8l-4 3h-19z" fill="url(#yl)" stroke="#5a4000" stroke-width="1.100"/><path d="M202 480h7v12h12v7M209 480l4-4M221 492l4-4" fill="none" stroke="#5a4000" stroke-width=".9"/><path d="M215 491l3-3v7l-3 3z" fill="none" stroke="#e01818" stroke-width="1.500"/><path d="M205 483v13h14" fill="none" stroke="#8a6a10" stroke-width=".8" stroke-dasharray="1.500 1.500"/><path d="M228 503v-4.500l-4.500 4.500z" fill="#000"/><path d="M237 473.500h6v10h11v7.500h-13l-4-4z" fill="url(#yl)" stroke="#5a4000" stroke-width="1.100"/><path d="M246 482l10 12M253 481l0 13" stroke="#777" stroke-width="1.600"/><circle cx="253.500" cy="498.500" r="2.600" fill="none" stroke="#c01818" stroke-width="1.300"/><circle cx="259.500" cy="495.500" r="2.600" fill="none" stroke="#c01818" stroke-width="1.300"/><path d="M208 537.500h10M213 532.500v10" stroke="#1560d0" stroke-width="1.800"/><path d="M228 546v-4.500l-4.500 4.500z" fill="#000"/><path d="M248 518v26" stroke="#1560d0" stroke-width="1.700"/><path d="M248 534l-10 7M248 534l10 7M248 522v12" stroke="#222" stroke-width="1.400"/><path d="M245.500 524l2.500-4.500 2.500 4.500zM236 542.500l1.500-4.500 3 3.500zM260 542.500l-1.500-4.500-3 3.500z" fill="#222"/><path d="M263 546v-4.500l-4.500 4.500z" fill="#000"/><path d="M204 563v-8M204 563l-4 3M204 563l7 1.500" stroke="#222" stroke-width="1.200"/><path d="M199.500 575.500h13M202 573l-3 2.500 3 2.500M210 573l3 2.500-3 2.500" stroke="#222" stroke-width="1.200" fill="none"/><path d="M216.800 560l7-6.500v14.500l-7 5.500z" fill="#f0c050" stroke="#8cb8ec" stroke-width="1.100"/><path d="M228 582v-4.500l-4.500 4.500z" fill="#000"/><path d="M241.700 554h5M244.200 551.500v5M241.200 569.300h6M244.200 566.300v6M250.400 578.200h6M253.400 575.200v6" stroke="#e01818" stroke-width="1.400"/><path d="M244.200 558v9M243 570.500l-4 3.500M245.500 570.500l4 3.500" stroke="#1560d0" stroke-width="1.400" stroke-dasharray="2 1.300"/><path d="M241.900 561.700l2.300-3 2.300 3-2.300 3zM236.500 576l1-4.500 3.500 3.300zM251.500 576l-1-4.500-3.500 3.300z" fill="#1560d0"/><path d="M263 582v-4.500l-4.500 4.500z" fill="#000"/></svg><span class="t" style="left:199.00px;top:520.98px;font-size:9px;line-height:11px;color:#000;font-family:'Liberation Sans',sans-serif;font-weight:bold;transform:scaleX(1.1914);transform-origin:0 0;">(XYZ)</span>
<div class="b" style="left:269px;top:203px;width:1650px;height:697.5px;background:linear-gradient(180deg,#1c2b46 0,#33445e 62.3%,#a2b0ca 100%);"></div><div class="b" style="left:269px;top:203px;width:1650px;height:1px;background:#5c5f66;"></div><div class="b" style="left:269px;top:203px;width:1px;height:697.5px;background:#62656c;"></div><svg class="b" style="left:269px;top:203px;" width="1650" height="697.5" viewBox="269 203 1650 697.500"><defs><linearGradient id="cy1" gradientUnits="userSpaceOnUse" x1="1030" y1="255" x2="1070" y2="320"><stop offset="0" stop-color="#1d80e0"/><stop offset=".35" stop-color="#1c78d2"/><stop offset="1" stop-color="#145aa2"/></linearGradient><linearGradient id="cy2" gradientUnits="userSpaceOnUse" x1="662" y1="337" x2="692" y2="365"><stop offset="0" stop-color="#1d80e0"/><stop offset=".5" stop-color="#1b74cc"/><stop offset="1" stop-color="#145aa2"/></linearGradient><linearGradient id="cy3" gradientUnits="userSpaceOnUse" x1="705" y1="478" x2="738" y2="512"><stop offset="0" stop-color="#1d80e0"/><stop offset=".5" stop-color="#1b74cc"/><stop offset="1" stop-color="#145aa2"/></linearGradient><linearGradient id="cy4" gradientUnits="userSpaceOnUse" x1="742" y1="498" x2="752" y2="520"><stop offset="0" stop-color="#1b74cc"/><stop offset="1" stop-color="#145aa2"/></linearGradient><radialGradient id="ball" gradientUnits="userSpaceOnUse" cx="1022" cy="684" r="82"><stop offset="0" stop-color="#2290f0"/><stop offset=".4" stop-color="#1d7eda"/><stop offset="1" stop-color="#145aa2"/></radialGradient><linearGradient id="bowl" gradientUnits="userSpaceOnUse" x1="995" y1="705" x2="1085" y2="762"><stop offset="0" stop-color="#1c7ad4"/><stop offset=".5" stop-color="#1868b8"/><stop offset="1" stop-color="#13569c"/></linearGradient><radialGradient id="hl"><stop offset="0" stop-color="#6adcff" stop-opacity="1"/><stop offset=".45" stop-color="#2fa4f6" stop-opacity=".7"/><stop offset="1" stop-color="#1f88ec" stop-opacity="0"/></radialGradient></defs><polygon points="647.2,514.9 658.4,507.7 921.5,698.3 967,668.7 1217.7,844.5 1161.5,887.7" fill="#1d84e6" stroke="#000" stroke-width="1.1" stroke-linejoin="round" /><polygon points="1161.5,887.7 1217.7,844.5 1218.7,856.5 1160.5,899.3" fill="#1661ae" stroke="#000" stroke-width="1.1" stroke-linejoin="round" /><polygon points="668.3,334.2 819.9,299.2 880,286.2 940,273.8 1022.1,257.8 1018.7,259.5 989.9,269.7 940,278.6 880,290.8 819.9,302.5 674.2,334.6" fill="#1d7fde" stroke="#000" stroke-width="1.1" stroke-linejoin="round" /><polygon points="674.2,334.6 819.9,302.5 880,290.8 940,278.6 989.9,269.7 1000,330 977,341.3 705.5,385 690,350" fill="#1d7fde" stroke="#000" stroke-width="1.1" stroke-linejoin="round" /><polygon points="683.9,366 696,361.2 748.7,497 738,502.4" fill="#1661ae" stroke="#000" stroke-width="1.1" stroke-linejoin="round" /><path d="M738 502.4L748.7 497C749.2 498.5 751.4 502.8 751.8 506.0 C752.1 509.2 751.8 513.9 750.8 516.5 C749.8 519.1 747.6 520.9 746.0 521.5 C744.4 522.1 741.8 520.2 741.0 520.0L735 505Z" fill="url(#cy4)" stroke="#000" stroke-width="1.1" stroke-linejoin="round" stroke-linecap="round" /><path d="M655.9 340.1C657.8 339.2 664.5 335.8 667.5 334.8 C670.5 333.8 671.3 333.4 673.8 334.3 C676.3 335.2 679.5 337.4 682.3 340.1 C685.1 342.8 688.4 347.1 690.7 350.6 C693.0 354.1 695.1 359.4 696.0 361.2L683.9 366C682.4 363.8 677.8 356.4 674.9 352.8 C672.0 349.2 669.6 346.4 666.4 344.3 C663.2 342.2 657.6 340.8 655.9 340.1Z" fill="url(#cy2)" stroke="#000" stroke-width="1.1" stroke-linejoin="round" stroke-linecap="round" /><path d="M650.6 355.9C650.5 354.3 649.4 349.0 650.3 346.4 C651.2 343.8 653.2 340.5 655.9 340.1 C658.6 339.8 663.2 342.2 666.4 344.3 C669.6 346.4 672.0 349.2 674.9 352.8 C677.8 356.4 682.4 363.8 683.9 366.0L735 497L700 482Z" fill="#1d7fde" stroke="#000" stroke-width="1.1" stroke-linejoin="round" stroke-linecap="round" /><polygon points="729.9,520.3 739.8,514.9 763.1,584.1 751.4,589.5" fill="#1661ae" stroke="#000" stroke-width="1.1" stroke-linejoin="round" /><path d="M697.5 481.7C698.4 481.9 700.5 481.2 702.9 482.6 C705.3 484.0 708.9 486.8 711.9 489.8 C714.9 492.8 718.5 497.0 720.9 500.6 C723.3 504.2 724.8 508.0 726.3 511.3 C727.8 514.6 729.3 518.8 729.9 520.3L739.8 514.9C739.5 513.4 739.4 509.9 738.0 506.0 C736.6 502.1 734.2 495.8 731.7 491.6 C729.2 487.4 725.7 483.5 722.7 480.8 C719.7 478.1 716.4 476.2 713.7 475.4 C711.0 474.6 708.9 475.1 706.5 475.8 C704.1 476.6 700.5 479.2 699.3 479.9Z" fill="url(#cy3)" stroke="#000" stroke-width="1.1" stroke-linejoin="round" stroke-linecap="round" /><path d="M647.2 514.9L682.2 540.4L693.9 484.4C694.5 483.9 696.0 482.0 697.5 481.7 C699.0 481.4 700.5 481.2 702.9 482.6 C705.3 484.0 708.9 486.8 711.9 489.8 C714.9 492.8 718.5 497.0 720.9 500.6 C723.3 504.2 724.8 508.0 726.3 511.3 C727.8 514.6 729.3 518.8 729.9 520.3L751.4 590.8L1161.5 887.7L1160.5 899.3L648.6 525.5Z" fill="#1d7fde" stroke="#000" stroke-width="1.1" stroke-linejoin="round" stroke-linecap="round" /><ellipse cx="710.5" cy="508.7" rx="6.300" ry="15.4" transform="rotate(-30 710.5 508.7)" fill="#1d7fde" stroke="#000" stroke-width="1.1"/><polygon points="1068,758 1080,749 1093.2,788.3 1081.5,797" fill="#1661ae" stroke="#000" stroke-width="1.1" stroke-linejoin="round" /><polygon points="1028.5,759 1068,758 1081.5,797" fill="#1d7fde" stroke="#000" stroke-width="1.1" stroke-linejoin="round" /><polygon points="1040.4,452.8 1053.6,445.7 1061.3,672.4 1049,679.6" fill="#1661ae" stroke="#000" stroke-width="1.1" stroke-linejoin="round" /><path d="M987.3 703.1 C987.4 704.6 987.0 708.0 988.0 712.0 C989.0 716.0 990.1 721.3 993.2 726.9 C996.3 732.5 1000.9 740.3 1006.4 745.4 C1011.9 750.5 1019.6 754.6 1026.2 757.3 C1032.8 759.9 1039.5 761.3 1046.1 761.3 C1052.7 761.3 1059.3 759.9 1065.9 757.3 C1072.5 754.6 1080.6 750.0 1085.7 745.4 C1090.8 740.8 1093.8 735.8 1096.3 729.6 C1098.8 723.4 1100.1 712.8 1100.9 708.4 C1101.7 704.0 1100.9 704.0 1100.9 703.1L1097.6 689.9L1088.3 679.4L1044 660L993.2 688.6Z" fill="url(#bowl)"/><path d="M993.2 688.6 C992.2 691.0 987.7 698.5 987.3 703.1 C986.9 707.7 987.9 711.7 990.6 716.3 C993.4 720.9 998.3 726.8 1003.8 730.9 C1009.3 735.0 1017.0 738.7 1023.6 740.8 C1030.2 742.9 1036.4 743.6 1043.4 743.4 C1050.5 743.2 1058.9 741.8 1065.9 739.5 C1073.0 737.2 1080.4 733.5 1085.7 729.6 C1091.0 725.7 1095.1 720.7 1097.6 716.3 C1100.1 711.9 1100.9 707.5 1100.9 703.1 C1100.9 698.7 1099.7 693.9 1097.6 689.9 C1095.5 685.9 1089.8 681.1 1088.3 679.4L1093.6 703.1C1093.2 705.1 1093.2 711.0 1091.0 715.0 C1088.8 719.0 1085.2 723.5 1080.4 726.9 C1075.6 730.3 1068.3 733.6 1061.9 735.5 C1055.5 737.4 1049.1 738.4 1042.1 738.1 C1035.0 737.8 1025.5 735.8 1019.6 733.5 C1013.7 731.2 1009.9 727.6 1006.4 724.3 C1002.9 721.0 1000.2 717.8 998.5 713.7 C996.8 709.6 996.3 702.1 995.9 699.8Z" fill="#1b76d2"/><path d="M995.9 699.8 C996.1 697.9 995.9 692.5 997.2 688.6 C998.5 684.8 1000.9 680.5 1003.8 676.7 C1006.6 673.0 1010.8 668.9 1014.3 666.1 C1017.8 663.4 1021.3 661.8 1024.9 660.2 C1028.5 658.6 1032.2 657.1 1036.0 656.3 C1039.8 655.5 1043.7 654.9 1048.0 655.2 C1052.3 655.5 1057.4 656.6 1061.9 658.2 C1066.4 659.8 1071.1 661.5 1075.1 664.8 C1079.1 668.1 1082.8 673.4 1085.7 678.0 C1088.6 682.6 1091.0 688.4 1092.3 692.6 C1093.6 696.8 1093.4 701.4 1093.6 703.1C1093.2 705.1 1093.2 711.0 1091.0 715.0 C1088.8 719.0 1085.2 723.5 1080.4 726.9 C1075.6 730.3 1068.3 733.6 1061.9 735.5 C1055.5 737.4 1049.1 738.4 1042.1 738.1 C1035.0 737.8 1025.5 735.8 1019.6 733.5 C1013.7 731.2 1009.9 727.6 1006.4 724.3 C1002.9 721.0 1000.2 717.8 998.5 713.7 C996.8 709.6 996.3 702.1 995.9 699.8Z" fill="url(#ball)"/><path d="M993.2 688.6 C992.2 691.0 987.7 698.5 987.3 703.1 C986.9 707.7 987.9 711.7 990.6 716.3 C993.4 720.9 998.3 726.8 1003.8 730.9 C1009.3 735.0 1017.0 738.7 1023.6 740.8 C1030.2 742.9 1036.4 743.6 1043.4 743.4 C1050.5 743.2 1058.9 741.8 1065.9 739.5 C1073.0 737.2 1080.4 733.5 1085.7 729.6 C1091.0 725.7 1095.1 720.7 1097.6 716.3 C1100.1 711.9 1100.9 707.5 1100.9 703.1 C1100.9 698.7 1099.7 693.9 1097.6 689.9 C1095.5 685.9 1089.8 681.1 1088.3 679.4" fill="none" stroke="#000" stroke-width="1.1"/><path d="M995.9 699.8 C996.3 702.1 996.8 709.6 998.5 713.7 C1000.2 717.8 1002.9 721.0 1006.4 724.3 C1009.9 727.6 1013.7 731.2 1019.6 733.5 C1025.5 735.8 1035.0 737.8 1042.1 738.1 C1049.1 738.4 1055.5 737.4 1061.9 735.5 C1068.3 733.6 1075.6 730.3 1080.4 726.9 C1085.2 723.5 1088.8 719.0 1091.0 715.0 C1093.2 711.0 1093.2 705.1 1093.6 703.1" fill="none" stroke="#000" stroke-width="1.1"/><ellipse cx="1025" cy="684" rx="14" ry="9.500" fill="url(#hl)" transform="rotate(-25 1025 684)"/><ellipse cx="1018.3" cy="724.5" rx="11" ry="9" fill="url(#hl)" transform="rotate(-25 1018.3 724.5)"/><ellipse cx="1055" cy="703" rx="16" ry="9" fill="url(#hl)" opacity=".3" transform="rotate(-30 1055 703)"/><polygon points="1017,448.5 1040.4,452.8 1049,679.6 1026.2,665.3" fill="#1d7fde" stroke="#000" stroke-width="1.1" stroke-linejoin="round" /><polygon points="1040.4,452.8 1053.6,445.7 1061.3,672.4 1049,679.6" fill="#1661ae" stroke="#000" stroke-width="1.1" stroke-linejoin="round" /><polygon points="1034,315 1075.3,290 1077.4,419.6 1037.2,399.5" fill="#1d7fde" stroke="#000" stroke-width="1.1" stroke-linejoin="round" /><polygon points="1037.2,399.5 1077.4,419.6 1039.3,446" fill="#1e84e6" stroke="#000" stroke-width="1.1" stroke-linejoin="round" /><polygon points="1075.3,290.6 1081.6,288.5 1085.2,424.9 1077.4,419.6" fill="#1661ae" stroke="#000" stroke-width="1.1" stroke-linejoin="round" /><polygon points="1039.3,446 1077.4,419.6 1085.2,424.9 1031.9,456.6" fill="#1661ae" stroke="#000" stroke-width="1.1" stroke-linejoin="round" /><path d="M1022.1 257.8C1023.2 256.8 1026.6 253.8 1028.8 251.9 C1031.0 250.0 1033.1 247.9 1035.0 246.5 C1036.9 245.1 1038.5 244.5 1040.4 243.7 C1042.4 242.9 1044.1 241.6 1046.7 241.6 C1049.3 241.6 1052.9 241.9 1056.2 243.7 C1059.5 245.5 1063.6 249.0 1066.8 252.2 C1070.0 255.4 1073.0 259.1 1075.3 262.8 C1077.6 266.5 1079.4 270.0 1080.6 274.4 C1081.8 278.8 1082.3 286.6 1082.7 289.0L1075.8 291.3L1072 308C1070.8 309.3 1067.9 313.1 1064.7 315.6 C1061.5 318.1 1056.8 320.6 1053.0 322.8 C1049.2 325.0 1045.0 327.3 1042.0 328.8 C1039.0 330.3 1035.9 331.5 1034.7 332.0L1034 315C1033.5 313.2 1032.6 308.3 1031.0 304.0 C1029.4 299.7 1027.3 294.0 1024.5 289.2 C1021.7 284.4 1017.5 278.8 1014.0 275.4 C1010.5 272.0 1005.2 269.7 1003.4 268.6L1018.7 259.5Z" fill="url(#cy1)"/><path d="M1022.1 257.8C1023.2 256.8 1026.6 253.8 1028.8 251.9 C1031.0 250.0 1033.1 247.9 1035.0 246.5 C1036.9 245.1 1038.5 244.5 1040.4 243.7 C1042.4 242.9 1044.1 241.6 1046.7 241.6 C1049.3 241.6 1052.9 241.9 1056.2 243.7 C1059.5 245.5 1063.6 249.0 1066.8 252.2 C1070.0 255.4 1073.0 259.1 1075.3 262.8 C1077.6 266.5 1079.4 270.0 1080.6 274.4 C1081.8 278.8 1082.3 286.6 1082.7 289.0" fill="none" stroke="#000" stroke-width="1.1"/><path d="M1034 250 C1036.0 250.2 1042.0 249.4 1045.7 251.0 C1049.4 252.6 1052.8 256.4 1056.0 259.6 C1059.2 262.8 1062.2 266.5 1064.7 270.0 C1067.2 273.5 1069.5 277.1 1071.0 280.7 C1072.5 284.2 1073.5 289.5 1074.0 291.3" fill="none" stroke="#000" stroke-width="1.1"/><path d="M1040.4 245.9 C1042.2 246.2 1047.5 245.7 1051.0 247.4 C1054.5 249.2 1058.3 252.8 1061.5 256.4 C1064.7 260.0 1067.9 265.2 1070.0 269.1 C1072.1 273.0 1073.2 276.0 1074.2 279.7 C1075.2 283.4 1075.5 289.4 1075.8 291.3" fill="none" stroke="#000" stroke-width="1.1"/><path d="M1075.8 291.3L1082.7 289" stroke="#000" stroke-width="1.1"/><path d="M989.9 269.7L992.5 268.8C993.6 268.5 997.1 267.1 999.2 267.1 C1001.3 267.1 1003.1 267.7 1005.2 268.8 C1007.3 269.9 1009.5 271.5 1011.9 273.9 C1014.3 276.3 1017.0 279.5 1019.5 283.2 C1022.0 286.9 1025.0 291.7 1027.1 295.9 C1029.2 300.1 1031.0 305.4 1032.2 308.6 C1033.4 311.8 1033.7 313.9 1034.0 315.0L1027.7 318C1027.3 316.8 1026.6 313.8 1025.5 311.0 C1024.4 308.2 1022.9 304.6 1021.2 301.0 C1019.5 297.4 1017.3 292.5 1015.3 289.1 C1013.3 285.7 1011.6 283.2 1009.4 280.7 C1007.1 278.2 1003.9 275.6 1001.8 273.9 C999.7 272.2 998.7 271.2 996.7 270.5 C994.7 269.8 991.0 269.8 989.9 269.7Z" fill="#1a70c6" stroke="#000" stroke-width="1.1" stroke-linejoin="round" stroke-linecap="round" /><polygon points="1027.7,318 1034,315 1039.3,446 1031.9,456.6" fill="#1661ae" stroke="#000" stroke-width="1.1" stroke-linejoin="round" /><path d="M976.8 285.7C977.2 284.4 977.8 280.4 979.0 278.1 C980.2 275.9 982.2 273.6 984.0 272.2 C985.8 270.8 987.8 270.0 989.9 269.7 C992.0 269.4 994.7 269.8 996.7 270.5 C998.7 271.2 999.7 272.2 1001.8 273.9 C1003.9 275.6 1007.1 278.2 1009.4 280.7 C1011.6 283.2 1013.3 285.7 1015.3 289.1 C1017.3 292.5 1019.5 297.4 1021.2 301.0 C1022.9 304.6 1024.4 308.2 1025.5 311.0 C1026.6 313.8 1027.3 316.8 1027.7 318.0L1031.9 456.6L983.7 428Z" fill="#1d7fde" stroke="#000" stroke-width="1.1" stroke-linejoin="round" stroke-linecap="round" /><ellipse cx="1002" cy="309.2" rx="10.8" ry="18" transform="rotate(-28 1002 309.2)" fill="#1d7fde" stroke="#000" stroke-width="1.1"/></svg>
<div class="b" style="left:190px;top:900.5px;width:1729px;height:45.5px;background:linear-gradient(180deg,#fff 0,#fbfbfb 6px,#f2f2f2 16px,#f0f0f0 100%);"></div><div class="b" style="left:200px;top:908px;width:22.5px;height:26.5px;background:#e1e1e1;border:1px solid #adadad;box-sizing:border-box;"></div><div class="b" style="left:228px;top:908px;width:22.5px;height:26.5px;background:#e1e1e1;border:1px solid #adadad;box-sizing:border-box;"></div><svg class="b" style="left:202px;top:912px;" width="19" height="18" viewBox="0 0 19 18"><path d="M.5 9L9 1v5.300h9.500v5.400H9v5.300z" fill="#000"/></svg><span class="t" style="left:231.50px;top:910.32px;font-size:19px;line-height:24px;color:#f01010;font-family:'Liberation Sans',sans-serif;transform:scaleX(1.1835);transform-origin:0 0;-webkit-text-stroke:.6px #f01010;">X</span><span class="t" style="left:259.00px;top:912.66px;font-size:16px;line-height:20px;color:#000;font-family:'Liberation Sans',sans-serif;transform:scaleX(1.0129);transform-origin:0 0;">Select the instances to merge</span><div class="b" style="left:482px;top:907.5px;width:45.5px;height:28.5px;background:#e1e1e1;border:2px solid #0078d7;box-sizing:border-box;"></div><span class="t" style="left:485.50px;top:912.66px;font-size:16px;line-height:20px;color:#000;font-family:'Liberation Sans',sans-serif;transform:scaleX(1.0065);transform-origin:0 0;">Done</span><div class="b" style="left:1668px;top:907.5px;width:85.5px;height:28.5px;background:#e1e1e1;border:1px solid #adadad;box-sizing:border-box;"></div><span class="t" style="left:1672.20px;top:912.36px;font-size:16px;line-height:20px;color:#000;font-family:'Liberation Sans',sans-serif;transform:scaleX(0.9509);transform-origin:0 0;">Instances...</span><svg class="b" style="left:1785px;top:905px;" width="35" height="35" viewBox="1785 905 35 35"><g fill="none" stroke="#1aa3a8" stroke-linecap="round"><path d="M1795 911.500q5-3 8.500-.500t-3 7.500" stroke-width="1.600"/><path d="M1790 935.500q8-2 11-8.500t-3.500-6.500-5.500 5 6 6.500 13.500-2.500" stroke-width="1.700"/><path d="M1812 921.500h-6.500l-1.500 5h4.500q2 0 1.500 2.500t-3 2.500h-6" stroke-width="2"/></g></svg><span class="t" style="left:1821.00px;top:919.58px;font-size:14.5px;line-height:18px;color:#1aa3a8;font-family:'Liberation Sans',sans-serif;font-style:italic;transform:scaleX(1.6203);transform-origin:0 0;-webkit-text-stroke:.5px #1aa3a8;">SIMULIA</span><span class="t" style="left:1695.00px;top:919.40px;font-size:15px;line-height:19px;color:rgba(255,255,255,.55);font-family:'Liberation Sans',sans-serif;transform:scaleX(1.0000);transform-origin:0 0;">htt</span><span class="t" style="left:1711.68px;top:919.40px;font-size:15px;line-height:19px;color:rgba(255,255,255,.55);font-family:'Liberation Sans',sans-serif;transform:scaleX(1.2012);transform-origin:0 0;">ps://blog.csdn.net/weixin_</span><svg class="b" style="left:1240px;top:260px;" width="100" height="100" viewBox="1240 260 100 100"><g stroke="#dcdc14" stroke-width="1.4" fill="none"><path d="M1281.8 327.1L1283.2 286.4M1281.8 327.1L1318.3 346.2M1281.8 327.1L1253.8 343.5"/></g></svg><span class="t" style="left:1283.90px;top:268.74px;font-size:15px;line-height:19px;color:#dcdc14;font-family:'Liberation Serif',serif;font-weight:bold;transform:scaleX(0.9324);transform-origin:0 0;">Y</span><span class="t" style="left:1322.50px;top:334.84px;font-size:15px;line-height:19px;color:#dcdc14;font-family:'Liberation Serif',serif;font-weight:bold;transform:scaleX(0.8493);transform-origin:0 0;">X</span><span class="t" style="left:1245.90px;top:334.84px;font-size:15px;line-height:19px;color:#dcdc14;font-family:'Liberation Serif',serif;font-weight:bold;transform:scaleX(0.8395);transform-origin:0 0;">Z</span><svg class="b" style="left:1770px;top:225px;" width="90" height="110" viewBox="1770 225 90 110"><g stroke="#e4ccff" stroke-width="1.7" stroke-linejoin="round"><path d="M1811.4 252.7Q1788.500 266 1784.7 291L1785.4 299.3L1811.4 284.7Z" fill="#14596a"/><path d="M1813.3 252.7Q1835.500 266 1838.7 291L1838.7 299.3L1813.3 284.7Z" fill="#116272"/><path d="M1782.8 308.8L1811.4 293.6L1813.3 293.6L1841.8 308.8Q1836 322 1812.3 327.2Q1789 322 1782.8 308.8Z" fill="#105566"/><path d="M1812.3 246.9V303.7" fill="none" stroke-width="2"/></g><rect x="1808.8" y="240" width="6.6" height="7" fill="#e4ccff"/><rect x="1808" y="304" width="9.7" height="9.9" fill="#d4000f"/></svg><span class="t" style="left:1808.80px;top:224.77px;font-size:12.5px;line-height:16px;color:#dcdc14;font-family:'Liberation Sans',sans-serif;transform:scaleX(0.8395);transform-origin:0 0;">Y</span><span class="t" style="left:1774.00px;top:295.17px;font-size:12.5px;line-height:16px;color:#dcdc14;font-family:'Liberation Sans',sans-serif;transform:scaleX(0.8252);transform-origin:0 0;">Z</span><span class="t" style="left:1842.70px;top:295.17px;font-size:12.5px;line-height:16px;color:#dcdc14;font-family:'Liberation Sans',sans-serif;transform:scaleX(0.7556);transform-origin:0 0;">X</span><svg class="b" style="left:365px;top:800px;" width="75" height="60" viewBox="365 800 75 60"><defs><linearGradient id="tg" x1="0" x2="1"><stop offset="0" stop-color="#0a8a0a"/><stop offset=".5" stop-color="#22dd22"/><stop offset="1" stop-color="#0a8a0a"/></linearGradient><linearGradient id="tb" x1="0" y1="0" x2="0" y2="1"><stop offset="0" stop-color="#2222ee"/><stop offset="1" stop-color="#000090"/></linearGradient><linearGradient id="tr" x1="0" y1="0" x2="0" y2="1"><stop offset="0" stop-color="#ee2222"/><stop offset="1" stop-color="#8a0808"/></linearGradient></defs><path d="M403.6 839L400.4 834L383 844.7L380.8 841.1L373 854.5L388.4 853.5L386.2 849.9Z" fill="url(#tb)"/><path d="M400.4 839.1L403.6 833.9L421.2 844.6L423.4 841L431.4 854.3L415.8 853.4L418 849.8Z" fill="url(#tr)"/><path d="M399.2 837.500V817h-4.200L402.2 804 409.400 817h-4.200v20.500z" fill="url(#tg)"/></svg><span class="t" style="left:396.00px;top:780.43px;font-size:15.5px;line-height:19px;color:#fff;font-family:'Liberation Sans',sans-serif;transform:scaleX(1.1124);transform-origin:0 0;-webkit-text-stroke:.4px #fff;">Y</span><span class="t" style="left:356.20px;top:850.73px;font-size:15.5px;line-height:19px;color:#fff;font-family:'Liberation Sans',sans-serif;transform:scaleX(1.0139);transform-origin:0 0;-webkit-text-stroke:.4px #fff;">Z</span><span class="t" style="left:436.50px;top:850.73px;font-size:15.5px;line-height:19px;color:#fff;font-family:'Liberation Sans',sans-serif;transform:scaleX(1.0157);transform-origin:0 0;-webkit-text-stroke:.4px #fff;">X</span><svg class="b" style="left:1240px;top:600px;" width="500" height="330" viewBox="1240 600 500 330"><g fill="none" stroke="#fb0006" stroke-width="2.4" stroke-linecap="round" stroke-linejoin="round"><path d="M1252.2 616.3 C1254.4 615.2 1259.7 611.1 1265.3 609.8 C1270.9 608.4 1279.9 608.2 1285.7 608.2 C1291.5 608.2 1297.0 607.6 1300.0 609.8 C1303.0 612.0 1304.0 617.2 1304.0 621.2 C1304.0 625.2 1303.7 630.1 1300.0 633.5 C1296.3 636.9 1288.8 638.8 1281.6 641.6 C1274.4 644.5 1260.5 648.0 1257.1 650.6 C1253.7 653.2 1255.1 654.4 1261.2 657.1 C1267.3 659.8 1279.8 663.9 1293.9 666.9 C1308.0 669.9 1337.1 673.7 1345.7 675.1"/><path d="M1308.1 636.3 C1310.5 637.9 1313.2 639.7 1322.4 645.7 C1331.6 651.7 1349.6 664.0 1363.2 672.2 C1376.8 680.4 1390.4 686.9 1404.0 694.7 C1417.6 702.5 1431.2 711.6 1444.8 719.1 C1458.4 726.6 1470.6 731.2 1485.6 739.5 C1500.6 747.8 1523.0 760.7 1534.6 768.9 C1546.2 777.1 1546.8 781.7 1555.0 788.5 C1563.2 795.3 1574.8 802.2 1583.6 809.7 C1592.4 817.2 1597.2 824.1 1608.1 833.4 C1619.0 842.6 1635.3 854.9 1648.9 865.2 C1662.5 875.5 1678.2 887.0 1689.7 895.4 C1701.2 903.8 1713.5 912.0 1718.2 915.3"/><path d="M1679.2 870.1 C1679.7 871.3 1680.0 873.9 1682.3 877.1 C1684.6 880.4 1689.0 885.7 1693.2 889.6 C1697.4 893.5 1703.1 896.2 1707.3 900.5 C1711.5 904.8 1716.4 912.8 1718.2 915.3"/><path d="M1633.2 896.1 C1636.2 896.5 1644.8 897.3 1651.2 898.2 C1657.6 899.1 1664.9 899.8 1671.4 901.3 C1677.9 902.8 1684.1 905.5 1690.1 907.5 C1696.1 909.5 1702.6 911.7 1707.3 913.0 C1712.0 914.3 1716.4 914.9 1718.2 915.3"/></g></svg>
<div class="b" style="left:793px;top:59px;width:32px;height:31.5px;background:#cce4f7;border:1px solid #99c9ef;box-sizing:border-box;"></div><div class="b" style="left:923px;top:59px;width:33.5px;height:31.5px;background:#cce4f7;border:1px solid #99c9ef;box-sizing:border-box;"></div><svg class="b" style="left:0px;top:57px;" width="1260" height="108" viewBox="0 57 1260 108"><defs><linearGradient id="pg" x1="0" y1="0" x2="1" y2="1"><stop offset="0" stop-color="#fff"/><stop offset="1" stop-color="#c8c8e8"/></linearGradient><linearGradient id="fg" x1="0" y1="0" x2="1" y2="0"><stop offset="0" stop-color="#fff6c0"/><stop offset="1" stop-color="#f0b818"/></linearGradient><linearGradient id="prg" x1="0" y1="0" x2="0" y2="1"><stop offset="0" stop-color="#28289a"/><stop offset=".6" stop-color="#7c7cd0"/><stop offset="1" stop-color="#b8b8ec"/></linearGradient><linearGradient id="dbg" x1="0" y1="0" x2="1" y2="0"><stop offset="0" stop-color="#8aa0c8"/><stop offset=".5" stop-color="#e4ecfa"/><stop offset="1" stop-color="#8aa0c8"/></linearGradient><linearGradient id="og" x1="0" y1="0" x2="0" y2="1"><stop offset="0" stop-color="#fbd890"/><stop offset="1" stop-color="#e09020"/></linearGradient><linearGradient id="yg" x1="0" y1="0" x2="1" y2="1"><stop offset="0" stop-color="#fde890"/><stop offset="1" stop-color="#e0a830"/></linearGradient><radialGradient id="ig" cx=".4" cy=".35" r=".7"><stop offset="0" stop-color="#7fa2e0"/><stop offset="1" stop-color="#2c55b0"/></radialGradient><radialGradient id="mg" cx=".4" cy=".4" r=".6"><stop offset="0" stop-color="#fff"/><stop offset="1" stop-color="#d8d8d8"/></radialGradient></defs><path d="M17 64.500h11l6 6v16h-17z" fill="url(#pg)" stroke="#6a6a6a" stroke-width="1.200"/><path d="M28 64.500v6h6" fill="#e8e8f4" stroke="#6a6a6a" stroke-width="1"/><path d="M46 84.500v-16h6l2 2h12v4" fill="#fff" stroke="#777" stroke-width="1.200"/><path d="M46 84.500l5-11h21l-5 11z" fill="url(#fg)" stroke="#7a6a30" stroke-width="1.100"/><path d="M58 66q5-6 12-1.500M66.500 61l6 1.500-2.500 6z" fill="#e01818" stroke="#e01818" stroke-width="1.600" stroke-linejoin="round" fill-rule="nonzero"/><rect x="80.500" y="64.500" width="19" height="20" fill="#3f62b8" stroke="#2a3c90" stroke-width="1.200"/><rect x="84" y="66" width="12" height="7.500" fill="#e8e8e8" stroke="#888" stroke-width=".8"/><rect x="85" y="77.500" width="10" height="6" fill="#555"/><rect x="86" y="78.500" width="3" height="4" fill="#ddd"/><rect x="115" y="63" width="14.500" height="8" fill="#fff" stroke="#777" stroke-width="1"/><rect x="117" y="65.500" width="10.500" height="2.500" fill="#aaa"/><path d="M110 72q0-2 2-2h20.500q2 0 2 2v10.500h-24.500z" fill="url(#prg)" stroke="#28288a" stroke-width=".8"/><rect x="116" y="80" width="13" height="6.500" fill="#fff" stroke="#8080c0" stroke-width="1"/><circle cx="125.500" cy="76.500" r="1.100" fill="#f0a020"/><circle cx="129" cy="76.500" r="1.100" fill="#30c060"/><circle cx="132.500" cy="76.500" r="1.100" fill="#e04040"/><path d="M147 71.500v13q0 3 8 3t8-3v-13" fill="url(#dbg)" stroke="#55658a" stroke-width="1.100"/><ellipse cx="155" cy="71.500" rx="8" ry="2.500" fill="#dfe8f8" stroke="#55658a" stroke-width="1"/><path d="M147 76.500q0 2.500 8 2.500t8-2.500M147 81q0 2.500 8 2.500t8-2.500" fill="none" stroke="#55658a" stroke-width="1"/><path d="M151.5 61.500v13.500h-4l7.500 7.500 7.500-7.500h-4v-13.500z" fill="#e00010" fill-opacity=".92"/><path d="M147.5 73l7.500 9 7.500-9z" fill="#f0a0b0" fill-opacity=".55"/><path d="M179.5 71.500v13q0 3 8 3t8-3v-13" fill="url(#dbg)" stroke="#55658a" stroke-width="1.100"/><ellipse cx="187.5" cy="71.500" rx="8" ry="2.500" fill="#dfe8f8" stroke="#55658a" stroke-width="1"/><path d="M179.5 76.500q0 2.500 8 2.500t8-2.500M179.5 81q0 2.500 8 2.500t8-2.500" fill="none" stroke="#55658a" stroke-width="1"/><path d="M184 83v-14h-4l7.500-8 7.500 8h-4v14z" fill="#e00010" fill-opacity=".92"/><path d="M184 83v-9h7v9z" fill="#f0a0b0" fill-opacity=".6"/><path d="M272 63.500q11-2 13.500 8t-7 13.500q-6 2-8-3.500 0-3-4-3.500-5-1-6-6 0-7 11.500-8.500z" fill="#f4c080" stroke="#7a5020" stroke-width="1.100"/><circle cx="265.500" cy="69.500" r="2.300" fill="#e01818"/><circle cx="273" cy="67.500" r="2.300" fill="#f0e020"/><circle cx="280" cy="73" r="2.300" fill="#182898"/><circle cx="277" cy="81" r="2.500" fill="#188828"/><ellipse cx="266.500" cy="79" rx="3" ry="2" fill="#fff" stroke="#7a5020" stroke-width=".7"/><path d="M475.5 70h16.5v15.5h-16.5z" fill="#c9b488" stroke="#8a6420" stroke-width="1.2" /><path d="M475.5 70l6.5 -6.5h16.5l-6.5 6.5z" fill="#d8c8a0" stroke="#8a6420" stroke-width="1.2" /><path d="M492 70l6.5 -6.5v15.5l-6.5 6.5z" fill="#b89c68" stroke="#8a6420" stroke-width="1.2" /><path d="M482 63.500v15.500h16.500M482 79l-6.500 6.500" fill="none" stroke="#8a6420" stroke-width="1"/><path d="M506 72h9.500l-4.750 5.200z" fill="#000"/><circle cx="586.500" cy="75" r="12.500" fill="url(#ig)" stroke="#24468c" stroke-width="1"/><text x="582.500" y="83.500" font-family="Liberation Serif" font-style="italic" font-weight="bold" font-size="22" fill="#fff">i</text><path d="M625.500 65v19.500l4.500-4 3.500 7.500 3-1.500-3.500-7.200h6.500z" fill="#fff" stroke="#8a8a8a" stroke-width="1.200" stroke-linejoin="round"/><rect x="809.500" y="67.500" width="13.500" height="20" fill="#f4e494" stroke="#8a7a30" stroke-width="1"/><rect x="797" y="64.500" width="14.500" height="14.500" fill="#e0a030" stroke="#8a5a10" stroke-width="1"/><rect x="802.500" y="72" width="10.500" height="11" fill="#3a48a8" stroke="#1a2470" stroke-width="1"/><g fill="#fafafa" stroke="#a0a0a0" stroke-width="1.100"><path d="M830 69.5h13v11h-13z" fill="#fafafa" stroke="#a0a0a0" stroke-width="1.1" /><path d="M830 69.5l6 -6h13l-6 6z" fill="#f0f0f0" stroke="#a0a0a0" stroke-width="1.1" /><path d="M843 69.5l6 -6v11l-6 6z" fill="#e4e4e4" stroke="#a0a0a0" stroke-width="1.1" /><path d="M838 77h12v10h-12z" fill="#fafafa" stroke="#a0a0a0" stroke-width="1.1" /><path d="M838 77l5 -5h12l-5 5z" fill="#f0f0f0" stroke="#a0a0a0" stroke-width="1.1" /><path d="M850 77l5 -5v10l-5 5z" fill="#e4e4e4" stroke="#a0a0a0" stroke-width="1.1" /></g><path d="M853 90h3.500v-3.500z" fill="#999"/><path d="M862.500 65h22v17h-22z" fill="none" stroke="#d83a28" stroke-width="1.500"/><path d="M859 65h7M862.500 61.500v7M881 82h7.500M884.500 78.500v7" stroke="#d83a28" stroke-width="1.300"/><path d="M889 91.500v-4.500l-4.500 4.500z" fill="#000"/><path d="M908.300 65h-13.800v19.300h9" fill="none" stroke="#d83a28" stroke-width="1.300"/><path d="M891.500 65h6M894.500 62v6M908.300 63.500v23.500M905.800 84l2.500 3.500 2.500-3.500" stroke="#d83a28" stroke-width="1.200" fill="none"/><ellipse cx="899.800" cy="74.600" rx="3.100" ry="5.200" fill="#d01808"/><ellipse cx="908.300" cy="74.600" rx="3.300" ry="5.600" fill="#d01808"/><ellipse cx="916.200" cy="74.600" rx="3.200" ry="4.500" fill="#e8a030" stroke="#8a5a10" stroke-width=".7"/><path d="M921.500 91.500v-4.500l-4.500 4.500z" fill="#000"/><path d="M927.500 70l13-5 13 4.500v11l-13 6.500-13-6z" fill="url(#og)" stroke="#a06010" stroke-width="1"/><path d="M927.500 70l13 5 13-5.500M940.500 75v12" fill="none" stroke="#a06010" stroke-width="1"/><path d="M940.500 75l13-5.500v11l-13 6.500z" fill="#f08838" fill-opacity=".55" stroke="#e85a20" stroke-width="1.300"/><path d="M955 86l-9.500-8M945.500 78l4.500.5M945.500 78l.5 4.500" stroke="#1868c8" stroke-width="1.700" fill="none"/><g fill="#1c2a98" stroke="#1c2a98"><path d="M982.500 65v20M972.500 75h20" stroke-width="2.200"/><path d="M979 67.500l3.500-4.500 3.500 4.500zM979 82.500l3.500 4.500 3.500-4.500zM975 71.500l-4.500 3.500 4.500 3.500zM990 71.500l4.500 3.500-4.500 3.500z" stroke-width=".5"/></g><path d="M1013.500 86q-8-4-6.500-11.500t10-8.500v-3l8 5.500-8 5.500v-3.200q-5 .8-6 5t2.500 10.200z" fill="#1c2a98"/><path d="M1049 75.500l8.500 9" stroke="#b89050" stroke-width="2.600" stroke-linecap="round"/><circle cx="1044" cy="70.500" r="6.800" fill="url(#mg)" stroke="#b8b8b8" stroke-width="1.400"/><rect x="1067" y="62" width="13.500" height="13.500" fill="#fff" stroke="#e05a48" stroke-width="1.300"/><path d="M1084 80l8 8" stroke="#b89050" stroke-width="2.600" stroke-linecap="round"/><circle cx="1080.500" cy="76" r="5.800" fill="url(#mg)" stroke="#b8b8b8" stroke-width="1.400"/><rect x="1100.500" y="62.500" width="24" height="25" fill="#fdeaea" stroke="#d83a28" stroke-width="1.600"/><g fill="#d01808"><path d="M1103 65h6.500l-2.200 2.200 3 3-2.100 2.100-3-3-2.200 2.200zM1122 65v6.500l-2.200-2.200-3 3-2.100-2.100 3-3-2.200-2.200zM1103 85v-6.500l2.200 2.200 3-3 2.100 2.100-3 3 2.200 2.200zM1122 85h-6.500l2.200-2.200-3-3 2.100-2.100 3 3 2.200-2.200z"/></g><g fill="#1c2a98"><path d="M1138.500 86v-15h-4l5.500-8 5.500 8h-4v15zM1148.500 64v15h-4l5.500 8 5.500-8h-4v-15z"/></g><g stroke="#6a6a6a" stroke-width="1.800"><path d="M1183 63v24M1194.500 63v24"/></g><g stroke="#b48a3c" stroke-width="2.400"><path d="M1179.500 67h19M1179.500 72.500h19M1179.500 78h19M1179.500 83.500h19"/></g><g stroke="#6a6a6a" stroke-width="1.800"><path d="M1217 63l-4.500 24M1225 63l4.500 24"/></g><g stroke="#b48a3c" stroke-width="2.400"><path d="M1214.500 67h13M1213 72.500h16M1211.500 78h19M1209.500 84h23"/></g><ellipse cx="489" cy="110" rx="8.300" ry="9.300" fill="#fff" stroke="#777" stroke-width="1.200"/><ellipse cx="499.5" cy="110" rx="8.300" ry="9.300" fill="url(#og)" stroke="#777" stroke-width="1.200"/><ellipse cx="489" cy="110" rx="8.300" ry="9.300" fill="none" stroke="#777" stroke-width="1.100"/><ellipse cx="531.5" cy="110" rx="8.300" ry="9.300" fill="#fff" stroke="#777" stroke-width="1.200"/><ellipse cx="521" cy="110" rx="8.300" ry="9.300" fill="url(#og)" stroke="#777" stroke-width="1.200"/><ellipse cx="531.500" cy="110" rx="8.300" ry="9.300" fill="none" stroke="#777" stroke-width="1.100"/><circle cx="559" cy="110" r="9" fill="url(#og)" stroke="#a06a20" stroke-width="1"/><rect x="577.500" y="97.500" width="27" height="26" fill="#fff" stroke="#7a5a20" stroke-width="1.300"/><path d="M577.500 97.500h27l-27 26z" fill="#eaa038"/><path d="M584 106.500q9-2 13.500 11" fill="none" stroke="#000" stroke-width="2.800"/><path d="M581 108l8.500-7.500 1 9.500z" fill="#000"/><path d="M617 104.500Q624 99.500 630 103.500T633.700 112Q633 118 627.500 120" fill="none" stroke="#a0a0a0" stroke-width="1.300"/><path d="M614 102.500l5.500 1-4.500 4.500z" fill="#a8a8a8"/><path d="M663.500 104.500Q656.500 99.500 650.500 103.500T646.800 112Q647.500 118 653 120" fill="none" stroke="#a0a0a0" stroke-width="1.300"/><path d="M666.500 102.500l-5.500 1 4.500 4.500z" fill="#a8a8a8"/><rect x="677.500" y="98.500" width="9.500" height="5" fill="url(#og)" stroke="#a06a20" stroke-width=".9"/><path d="M676.800 108.500h10.200v4.600h4.200v7.700h-14.400z" fill="url(#og)" stroke="#a06a20" stroke-width=".9"/><rect x="697" y="113.300" width="5.500" height="7.500" fill="url(#og)" stroke="#a06a20" stroke-width=".9"/><rect x="709" y="99" width="26" height="22" rx="2" fill="#f4f4f4" stroke="#8a8060" stroke-width="1"/><path d="M709 101q0-2 2-2h22q2 0 2 2v4h-26z" fill="#2070c8"/><g stroke="#444" stroke-width="1.400"><path d="M712 109h4M718 109h12M712 113h4M718 113h12"/></g><g fill="#7a6a40"><rect x="711.5" y="116.5" width="6" height="3.500"/><rect x="719" y="116.5" width="6" height="3.500"/><rect x="726.5" y="116.5" width="6" height="3.500"/></g><path d="M753.5 104.5h17.5v17.5h-17.5z" fill="#a9bde8" stroke="#2a3c70" stroke-width="1" /><path d="M753.5 104.5l7 -7h17.5l-7 7z" fill="#c0d0f0" stroke="#2a3c70" stroke-width="1" /><path d="M771 104.5l7 -7v17.5l-7 7z" fill="#90a8dc" stroke="#2a3c70" stroke-width="1" /><g stroke="#2a3c70" stroke-width=".9" fill="none"><path d="M759.300 104.500v17.500M765.100 104.500v17.500M753.500 110.300h17.500M753.500 116.200h17.500M755.800 102.200h17.500M758.200 99.800h17.500M759.300 104.500l7-7M765.100 104.500l7-7M771 110.300l7-7M771 116.200l7-7M773.300 102.200v17.500M775.700 99.800v17.500"/></g><path d="M785.5 104.5h18v17.5h-18z" fill="#a9bde8" stroke="#e01818" stroke-width="1.6" stroke-dasharray="2 2"/><path d="M785.5 104.5l7 -7h18l-7 7z" fill="#c0d0f0" stroke="#e01818" stroke-width="1.6" stroke-dasharray="2 2"/><path d="M803.5 104.5l7 -7v17.5l-7 7z" fill="#90a8dc" stroke="#e01818" stroke-width="1.6" stroke-dasharray="2 2"/><path d="M818.5 104.5h17.5v17.5h-17.5z" fill="#38c038" stroke="#0a5a0a" stroke-width="1" /><path d="M818.5 104.5l7 -7h17.5l-7 7z" fill="#58d858" stroke="#0a5a0a" stroke-width="1" /><path d="M836 104.5l7 -7v17.5l-7 7z" fill="#1c8a1c" stroke="#0a5a0a" stroke-width="1" /><rect x="822" y="108" width="10.500" height="10.500" fill="#c0d070" stroke="#555" stroke-width="1"/><path d="M824.500 105.500h10.500v10.500" fill="none" stroke="#555" stroke-width="1"/><rect x="824.500" y="105.500" width="10.500" height="10.500" fill="#c8c870" fill-opacity=".6" stroke="#555" stroke-width=".8"/><path d="M862.5 105.5h16.5v16.5h-16.5z" fill="none" stroke="#8a5a10" stroke-width="1.3" /><path d="M862.5 105.5l7.5 -7.5h16.5l-7.5 7.5z" fill="none" stroke="#8a5a10" stroke-width="1.3" /><path d="M879 105.5l7.5 -7.5v16.5l-7.5 7.5z" fill="none" stroke="#8a5a10" stroke-width="1.3" /><path d="M870 98v16.500h16.500M870 114.500l-7.500 7.500" fill="none" stroke="#8a5a10" stroke-width="1.100"/><path d="M895.5 105.5h16.5v16.5h-16.5z" fill="#fff" stroke="#8a5a10" stroke-width="1.3" /><path d="M895.5 105.5l7.5 -7.5h16.5l-7.5 7.5z" fill="#fff" stroke="#8a5a10" stroke-width="1.3" /><path d="M912 105.5l7.5 -7.5v16.5l-7.5 7.5z" fill="#fff" stroke="#8a5a10" stroke-width="1.3" /><path d="M926.5 105.5h17v16.5h-17z" fill="url(#yg)" stroke="#8a5a10" stroke-width="1.1" /><path d="M926.5 105.5l7.5 -7.5h17l-7.5 7.5z" fill="#f8e090" stroke="#8a5a10" stroke-width="1.1" /><path d="M943.5 105.5l7.5 -7.5v16.5l-7.5 7.5z" fill="#c89020" stroke="#8a5a10" stroke-width="1.1" /><path d="M896.500 133.500h7v15h11.500v8h-18.500z" fill="url(#og)" stroke="#222" stroke-width="1.500"/><rect x="909" y="148.500" width="9.500" height="8" fill="#fff" stroke="#222" stroke-width="1.400"/><path d="M908 131.500v29" stroke="#e01818" stroke-width="1.800" stroke-dasharray="2.500 1.800"/><rect x="927" y="134.5" width="26" height="22" rx="2" fill="#f4f4f4" stroke="#8a8060" stroke-width="1"/><path d="M927 136.5q0-2 2-2h22q2 0 2 2v4h-26z" fill="#2070c8"/><g stroke="#444" stroke-width="1.400"><path d="M930 144.5h4M936 144.5h12M930 148.5h4M936 148.5h12"/></g><g fill="#7a6a40"><rect x="929.5" y="152" width="6" height="3.500"/><rect x="937" y="152" width="6" height="3.500"/><rect x="944.5" y="152" width="6" height="3.500"/></g></svg>
</body></html>
